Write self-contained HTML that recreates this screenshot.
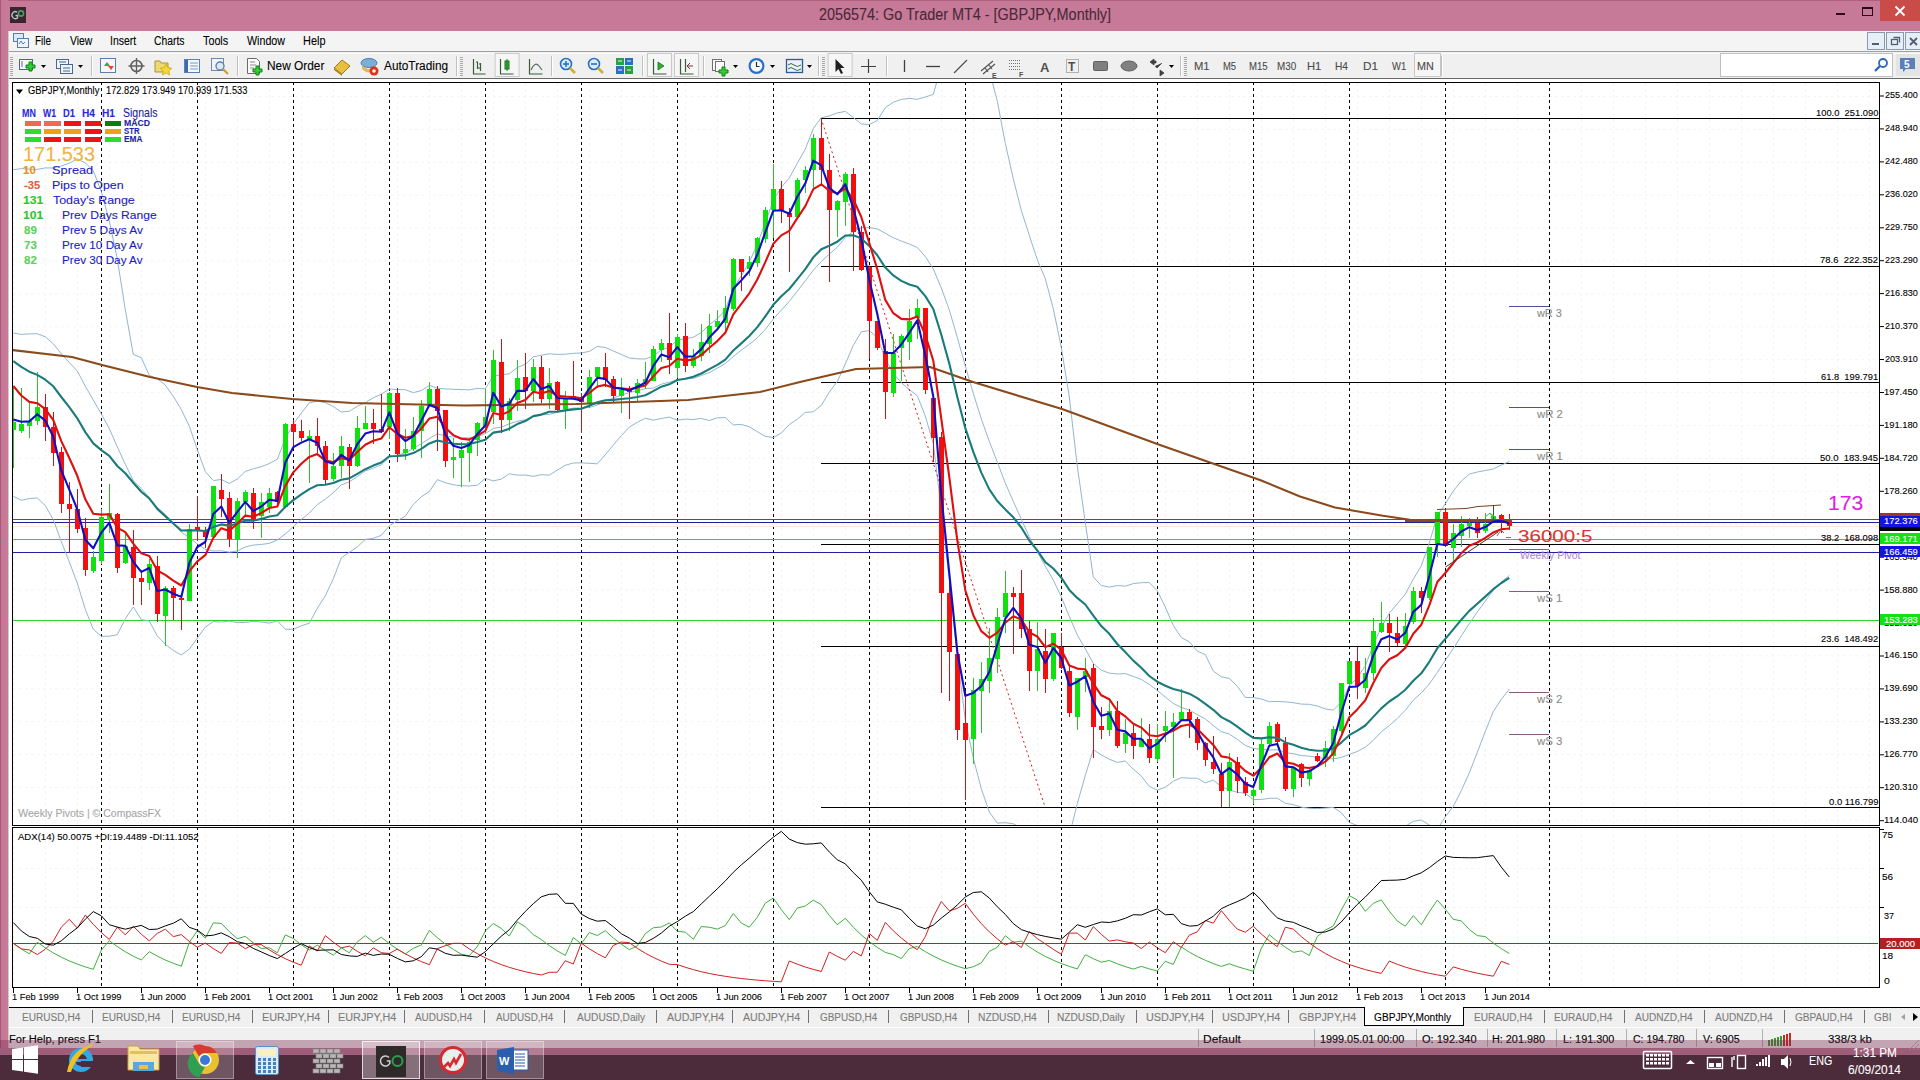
<!DOCTYPE html><html><head><meta charset="utf-8"><title>Go Trader MT4</title><style>
*{margin:0;padding:0;box-sizing:border-box}
html,body{width:1920px;height:1080px;overflow:hidden;background:#fff}
body{position:relative;font-family:'Liberation Sans',sans-serif}
.a{position:absolute;white-space:nowrap}
.t{transform-origin:0 0;-webkit-text-stroke:0.1px currentColor}
</style></head><body>
<div class="a" style="left:0;top:0;width:1920px;height:31px;background:#c67a97;border-top:1px solid #b0607e"></div>
<div class="a" style="left:0;top:0;width:8px;height:1060px;background:#c67a97"></div>
<div class="a" style="left:0;top:0;width:1px;height:1060px;background:#a65a78"></div>
<div class="a" style="left:8px;top:31px;width:1px;height:1029px;background:#d8c8d0"></div>
<svg class="a" style="left:10px;top:7px" width="16" height="16"><rect x="0" y="0" width="16" height="16" fill="#3a2430"/><path d="M7,5 a3.5,3.5 0 1 0 0.5,6 v-2.5 h-2" stroke="#b8c8c0" stroke-width="1.4" fill="none"/><circle cx="11" cy="6.5" r="2.6" fill="none" stroke="#4a9a6a" stroke-width="1.6"/></svg>
<div class="a" style="left:1880px;top:0;width:40px;height:21px;background:#c94c48"></div>
<div class="a" style="left:1836px;top:13px;width:9px;height:2px;background:#2a0a18"></div>
<div class="a" style="left:1862px;top:7px;width:11px;height:9px;border:1px solid #2a0a18;border-top:2px solid #2a0a18"></div>
<svg class="a" style="left:1894px;top:5px" width="12" height="12"><path d="M1.5,1.5 L10.5,10.5 M10.5,1.5 L1.5,10.5" stroke="#fff" stroke-width="1.8"/></svg>
<div class="a" style="left:9px;top:31px;width:1911px;height:21px;background:#f4f4f4;border-bottom:1px solid #a0a0a0"></div>
<div class="a" style="left:1867px;top:32px;width:18px;height:18px;background:#e6eef8;border:1px solid #8a9aaa"></div>
<div class="a" style="left:1886px;top:32px;width:18px;height:18px;background:#e6eef8;border:1px solid #8a9aaa"></div>
<div class="a" style="left:1905px;top:32px;width:18px;height:18px;background:#e6eef8;border:1px solid #8a9aaa"></div>
<div class="a" style="left:1872px;top:43px;width:7px;height:2px;background:#506070"></div>
<svg class="a" style="left:1888px;top:34px" width="14" height="14"><rect x="3.5" y="5.5" width="6" height="5" fill="none" stroke="#506070" stroke-width="1.3"/><path d="M5.5,3.5 H11.5 V8.5" fill="none" stroke="#506070" stroke-width="1.3"/></svg>
<svg class="a" style="left:1907px;top:34px" width="14" height="14"><path d="M3,4 L10,11 M10,4 L3,11" stroke="#506070" stroke-width="1.8"/></svg>
<svg class="a" style="left:13px;top:33px" width="16" height="15"><rect x="0.5" y="0.5" width="10" height="8" fill="#dde8f4" stroke="#5a7ca8"/><rect x="4.5" y="5.5" width="11" height="9" fill="#eef4fa" stroke="#5a7ca8"/><path d="M6,11 l2,-3 l2,3 l2,-2" stroke="#5a7ca8" fill="none"/></svg>
<div class="a" style="left:9px;top:52px;width:1911px;height:27px;background:#f0f0f0;border-bottom:1px solid #6a6a6a"></div>
<div class="a" style="left:9px;top:53px;width:1911px;height:1px;background:#fafafa"></div>
<div class="a" style="left:9px;top:79px;width:1911px;height:928px;background:#fff"></div>
<svg class="a" style="left:0;top:0" width="1920" height="80"><rect x="10" y="57" width="3" height="1" fill="#a8a8a8"/><rect x="10" y="59" width="3" height="1" fill="#a8a8a8"/><rect x="10" y="61" width="3" height="1" fill="#a8a8a8"/><rect x="10" y="63" width="3" height="1" fill="#a8a8a8"/><rect x="10" y="65" width="3" height="1" fill="#a8a8a8"/><rect x="10" y="67" width="3" height="1" fill="#a8a8a8"/><rect x="10" y="69" width="3" height="1" fill="#a8a8a8"/><rect x="10" y="71" width="3" height="1" fill="#a8a8a8"/><rect x="10" y="73" width="3" height="1" fill="#a8a8a8"/><rect x="10" y="75" width="3" height="1" fill="#a8a8a8"/><rect x="19.5" y="59.5" width="13" height="10" fill="#f4f8fc" stroke="#486890"/><path d="M22,61 v6" stroke="#8a5a9a"/><path d="M29,62 h3 v3 h3 v3 h-3 v3 h-3 v-3 h-3 v-3 h3 z" fill="#30d030" stroke="#10801a"/><path d="M41,65 h5 l-2.5,3 z" fill="#000"/><rect x="56.5" y="59.5" width="12" height="9" fill="#eef4fa" stroke="#486890"/><rect x="60.5" y="64.5" width="12" height="9" fill="#eef4fa" stroke="#486890"/><path d="M59,62 h7 M63,68 h7 M63,71 h7" stroke="#486890"/><path d="M78,65 h5 l-2.5,3 z" fill="#000"/><rect x="91" y="56" width="1" height="20" fill="#c0c0c0"/><rect x="92" y="56" width="1" height="20" fill="#fff"/><rect x="100.5" y="58.5" width="15" height="14" fill="#f4f8fc" stroke="#5a80b0"/><path d="M104,66 l3,-4 l3,4 z" fill="#20b040"/><path d="M108,66 l3,4 l3,-4 z" fill="#e04a30"/><circle cx="136.5" cy="66" r="5.5" fill="none" stroke="#606060" stroke-width="1.6"/><path d="M136.5,58 v16 M128.5,66 h16" stroke="#606060" stroke-width="1.4"/><path d="M155,61 h5 l1,2 h7 v9 h-13 z" fill="#f0d870" stroke="#b09030"/><path d="M166,64 l1.8,3.6 4,.6 -2.9,2.8 .7,4 -3.6,-1.9 -3.6,1.9 .7,-4 -2.9,-2.8 4,-.6 z" fill="#f8d830" stroke="#c0a020" stroke-width=".7"/><rect x="184.5" y="59.5" width="15" height="13" fill="#f4f8fc" stroke="#5a80b0"/><rect x="185" y="60" width="3" height="12" fill="#3a6ab8"/><path d="M190,63 h8 M190,66 h8 M190,69 h8" stroke="#7a9ac0"/><rect x="211.5" y="58.5" width="12" height="12" fill="#f0f4fa" stroke="#6a8ab0"/><circle cx="220" cy="66" r="4" fill="#dce8f4" stroke="#5a7ca8" stroke-width="1.3"/><path d="M223,69 l5,5" stroke="#c8a030" stroke-width="2.2"/><rect x="237" y="56" width="1" height="20" fill="#c0c0c0"/><rect x="238" y="56" width="1" height="20" fill="#fff"/><path d="M247.5,58.5 h9 l3,3 v12 h-12 z" fill="#fafafa" stroke="#6a6a6a"/><path d="M250,62 h5 M250,65 h6 M250,68 h4" stroke="#8a8a8a"/><path d="M256,66 h3 v3 h3 v3 h-3 v3 h-3 v-3 h-3 v-3 h3 z" fill="#30d030" stroke="#10801a"/><path d="M334,68 l8,-8 l8,6 l-8,8 z" fill="#e8c040" stroke="#a07818"/><path d="M334,68 l8,6 v2 l-8,-6 z" fill="#b08820"/><ellipse cx="369" cy="63" rx="8" ry="4.5" fill="#7ab0d8" stroke="#4a80b0"/><path d="M362,65 q7,8 14,0 v4 q-7,7 -14,0 z" fill="#e0b860"/><circle cx="374" cy="71" r="4.5" fill="#e03020"/><circle cx="374" cy="71" r="1.8" fill="#fff"/><rect x="456" y="56" width="1" height="20" fill="#c0c0c0"/><rect x="457" y="56" width="1" height="20" fill="#fff"/><rect x="460" y="57" width="3" height="1" fill="#a8a8a8"/><rect x="460" y="59" width="3" height="1" fill="#a8a8a8"/><rect x="460" y="61" width="3" height="1" fill="#a8a8a8"/><rect x="460" y="63" width="3" height="1" fill="#a8a8a8"/><rect x="460" y="65" width="3" height="1" fill="#a8a8a8"/><rect x="460" y="67" width="3" height="1" fill="#a8a8a8"/><rect x="460" y="69" width="3" height="1" fill="#a8a8a8"/><rect x="460" y="71" width="3" height="1" fill="#a8a8a8"/><rect x="460" y="73" width="3" height="1" fill="#a8a8a8"/><rect x="460" y="75" width="3" height="1" fill="#a8a8a8"/><path d="M473.5,59 v15 h12 M477.5,62 v7 M480.5,63 v8" stroke="#3a5a3a" stroke-width="1.2" fill="none"/><path d="M476,62 h2 M478,68 h2 M479,64 h2" stroke="#3a5a3a"/><rect x="495.1" y="53.5" width="24" height="23" fill="#f6f6f6" stroke="#c8c8c8"/><path d="M500.5,59 v15 h13" stroke="#3a5a3a" stroke-width="1.2" fill="none"/><rect x="505" y="61" width="4" height="8" fill="#30c030" stroke="#207020"/><path d="M507,59 v12" stroke="#207020"/><path d="M529.5,59 v15 h13" stroke="#3a5a3a" stroke-width="1.2" fill="none"/><path d="M531,70 q4,-9 8,-4 l3,4" stroke="#5a6a5a" fill="none" stroke-width="1.2"/><rect x="551" y="56" width="1" height="20" fill="#c0c0c0"/><rect x="552" y="56" width="1" height="20" fill="#fff"/><circle cx="566" cy="64" r="5.5" fill="#d8ecfa" stroke="#2a70c0" stroke-width="1.6"/><path d="M570,68 l5,5" stroke="#d0b030" stroke-width="2.6"/><path d="M563,64 h6" stroke="#2a70c0" stroke-width="1.6"/><path d="M566,61 v6" stroke="#2a70c0" stroke-width="1.6"/><circle cx="594" cy="64" r="5.5" fill="#d8ecfa" stroke="#2a70c0" stroke-width="1.6"/><path d="M598,68 l5,5" stroke="#d0b030" stroke-width="2.6"/><path d="M591,64 h6" stroke="#2a70c0" stroke-width="1.6"/><rect x="616" y="58" width="8" height="7" fill="#2aa040"/><rect x="625" y="58" width="8" height="7" fill="#2a70c0"/><rect x="616" y="66" width="8" height="8" fill="#2a70c0"/><rect x="625" y="66" width="8" height="8" fill="#2aa040"/><path d="M618,61 h4 M627,61 h4 M618,70 h4 M627,70 h4" stroke="#e8f4ff"/><rect x="642" y="56" width="1" height="20" fill="#c0c0c0"/><rect x="643" y="56" width="1" height="20" fill="#fff"/><rect x="647.5" y="53.5" width="24" height="23" fill="#f6f6f6" stroke="#c8c8c8"/><path d="M653.5,59 v15 h13" stroke="#3a5a3a" stroke-width="1.2" fill="none"/><path d="M658,62 v8 l6,-4 z" fill="#30b030" stroke="#207020" stroke-width=".8"/><rect x="674.5" y="53.5" width="24" height="23" fill="#f6f6f6" stroke="#c8c8c8"/><path d="M680.5,59 v15 h13 M685.5,59 v13" stroke="#3a5a3a" stroke-width="1.2" fill="none"/><path d="M693,66 h-6 l3,-3 M687,66 l3,3" stroke="#803030" fill="none"/><rect x="703" y="56" width="1" height="20" fill="#c0c0c0"/><rect x="704" y="56" width="1" height="20" fill="#fff"/><rect x="712.5" y="59.5" width="9" height="11" fill="#fafafa" stroke="#707070"/><rect x="715.5" y="61.5" width="9" height="10" fill="#fafafa" stroke="#707070"/><path d="M722,67 h3 v3 h3 v3 h-3 v3 h-3 v-3 h-3 v-3 h3 z" fill="#30d030" stroke="#10801a"/><path d="M733,65 h5 l-2.5,3 z" fill="#000"/><circle cx="756.5" cy="66" r="8" fill="#2a70c8"/><circle cx="756.5" cy="66" r="5.8" fill="#f8fcff"/><path d="M756.5,62 v4.5 h3" stroke="#203050" fill="none" stroke-width="1.2"/><path d="M770,65 h5 l-2.5,3 z" fill="#000"/><rect x="786.5" y="59.5" width="16" height="13" fill="#e8f2fa" stroke="#2a5a9a" stroke-width="1.3"/><path d="M788,65 q3,-3 6,0 t7,0 M788,69 q3,-3 6,0 t7,0" stroke="#3a6a3a" fill="none"/><path d="M807,65 h5 l-2.5,3 z" fill="#000"/><rect x="818" y="56" width="1" height="20" fill="#c0c0c0"/><rect x="819" y="56" width="1" height="20" fill="#fff"/><rect x="822" y="57" width="3" height="1" fill="#a8a8a8"/><rect x="822" y="59" width="3" height="1" fill="#a8a8a8"/><rect x="822" y="61" width="3" height="1" fill="#a8a8a8"/><rect x="822" y="63" width="3" height="1" fill="#a8a8a8"/><rect x="822" y="65" width="3" height="1" fill="#a8a8a8"/><rect x="822" y="67" width="3" height="1" fill="#a8a8a8"/><rect x="822" y="69" width="3" height="1" fill="#a8a8a8"/><rect x="822" y="71" width="3" height="1" fill="#a8a8a8"/><rect x="822" y="73" width="3" height="1" fill="#a8a8a8"/><rect x="822" y="75" width="3" height="1" fill="#a8a8a8"/><rect x="828.1" y="53.5" width="24" height="23" fill="#f6f6f6" stroke="#c8c8c8"/><path d="M835.5,59 v13 l3,-3 l2.5,5 l2,-1 l-2.5,-5 h4 z" fill="#202020"/><path d="M868.5,59 v14 M861,66.5 h15" stroke="#404040" stroke-width="1.2"/><rect x="886" y="56" width="1" height="20" fill="#c0c0c0"/><rect x="887" y="56" width="1" height="20" fill="#fff"/><path d="M904.5,60 v12" stroke="#404040" stroke-width="1.3"/><path d="M926,66.5 h14" stroke="#404040" stroke-width="1.3"/><path d="M954,73 l13,-13" stroke="#505050" stroke-width="1.3"/><path d="M981,71 l12,-10 M983,74 l12,-10 M985,68 l3,4 M989,65 l3,4" stroke="#505050" stroke-width="1.1"/><text x="992" y="78" font-size="7" font-family="Liberation Sans" font-weight="bold" fill="#505050">E</text><path d="M1009,60.5 h12 M1009,63.5 h12 M1009,66.5 h12 M1009,69.5 h12" stroke="#707070" stroke-dasharray="1,1"/><text x="1019" y="77" font-size="7" font-family="Liberation Sans" font-weight="bold" fill="#505050">F</text><text x="1040" y="72" font-size="13" font-family="Liberation Sans" font-weight="bold" fill="#505050">A</text><rect x="1066.5" y="59.5" width="12" height="13" fill="none" stroke="#707070" stroke-dasharray="1,1"/><text x="1068" y="71" font-size="12" font-family="Liberation Sans" font-weight="bold" fill="#505050">T</text><rect x="1093.5" y="61.5" width="14" height="9" rx="1" fill="#808080" stroke="#606060"/><ellipse cx="1129" cy="66" rx="8" ry="5" fill="#808080" stroke="#606060"/><path d="M1150,62 l4,-3 v2 h2 v2 h-2 v2 z M1155,66 l2,2 l5,-5 M1160,70 l4,3 l-4,3 z" fill="#404040" stroke="#404040" stroke-width=".8"/><path d="M1169,65 h5 l-2.5,3 z" fill="#000"/><rect x="1180" y="56" width="1" height="20" fill="#c0c0c0"/><rect x="1181" y="56" width="1" height="20" fill="#fff"/><rect x="1184" y="57" width="3" height="1" fill="#a8a8a8"/><rect x="1184" y="59" width="3" height="1" fill="#a8a8a8"/><rect x="1184" y="61" width="3" height="1" fill="#a8a8a8"/><rect x="1184" y="63" width="3" height="1" fill="#a8a8a8"/><rect x="1184" y="65" width="3" height="1" fill="#a8a8a8"/><rect x="1184" y="67" width="3" height="1" fill="#a8a8a8"/><rect x="1184" y="69" width="3" height="1" fill="#a8a8a8"/><rect x="1184" y="71" width="3" height="1" fill="#a8a8a8"/><rect x="1184" y="73" width="3" height="1" fill="#a8a8a8"/><rect x="1184" y="75" width="3" height="1" fill="#a8a8a8"/><rect x="1414.5" y="53.5" width="26" height="23" fill="#f6f6f6" stroke="#c8c8c8"/><rect x="1441" y="56" width="1" height="20" fill="#c0c0c0"/><rect x="1442" y="56" width="1" height="20" fill="#fff"/><rect x="1720.5" y="53.5" width="172" height="23" fill="#fff" stroke="#c0c0c0"/><circle cx="1883" cy="63" r="4" fill="none" stroke="#2a6ab8" stroke-width="1.8"/><path d="M1880,66 l-5,5" stroke="#2a6ab8" stroke-width="2.4"/><rect x="1896" y="54" width="24" height="22" fill="#e4e4e4"/><path d="M1900,58 h15 v11 h-9 l-3,3 v-3 h-3 z" fill="#5a80b8"/><text x="1904" y="68" font-size="10" font-family="Liberation Sans" font-weight="bold" fill="#fff">5</text></svg>
<svg class="a" style="left:0;top:0" width="1920" height="1080"><line x1="13" x2="1879" y1="96.5" y2="96.5" stroke="#f5f5f5" stroke-width="1" stroke-dasharray="3,3"/>
<line x1="13" x2="1879" y1="129.4" y2="129.4" stroke="#f5f5f5" stroke-width="1" stroke-dasharray="3,3"/>
<line x1="13" x2="1879" y1="162.3" y2="162.3" stroke="#f5f5f5" stroke-width="1" stroke-dasharray="3,3"/>
<line x1="13" x2="1879" y1="195.2" y2="195.2" stroke="#f5f5f5" stroke-width="1" stroke-dasharray="3,3"/>
<line x1="13" x2="1879" y1="228.1" y2="228.1" stroke="#f5f5f5" stroke-width="1" stroke-dasharray="3,3"/>
<line x1="13" x2="1879" y1="261.0" y2="261.0" stroke="#f5f5f5" stroke-width="1" stroke-dasharray="3,3"/>
<line x1="13" x2="1879" y1="293.9" y2="293.9" stroke="#f5f5f5" stroke-width="1" stroke-dasharray="3,3"/>
<line x1="13" x2="1879" y1="326.8" y2="326.8" stroke="#f5f5f5" stroke-width="1" stroke-dasharray="3,3"/>
<line x1="13" x2="1879" y1="359.7" y2="359.7" stroke="#f5f5f5" stroke-width="1" stroke-dasharray="3,3"/>
<line x1="13" x2="1879" y1="392.6" y2="392.6" stroke="#f5f5f5" stroke-width="1" stroke-dasharray="3,3"/>
<line x1="13" x2="1879" y1="425.5" y2="425.5" stroke="#f5f5f5" stroke-width="1" stroke-dasharray="3,3"/>
<line x1="13" x2="1879" y1="458.4" y2="458.4" stroke="#f5f5f5" stroke-width="1" stroke-dasharray="3,3"/>
<line x1="13" x2="1879" y1="491.3" y2="491.3" stroke="#f5f5f5" stroke-width="1" stroke-dasharray="3,3"/>
<line x1="13" x2="1879" y1="524.2" y2="524.2" stroke="#f5f5f5" stroke-width="1" stroke-dasharray="3,3"/>
<line x1="13" x2="1879" y1="557.1" y2="557.1" stroke="#f5f5f5" stroke-width="1" stroke-dasharray="3,3"/>
<line x1="13" x2="1879" y1="590.0" y2="590.0" stroke="#f5f5f5" stroke-width="1" stroke-dasharray="3,3"/>
<line x1="13" x2="1879" y1="622.9" y2="622.9" stroke="#f5f5f5" stroke-width="1" stroke-dasharray="3,3"/>
<line x1="13" x2="1879" y1="655.8" y2="655.8" stroke="#f5f5f5" stroke-width="1" stroke-dasharray="3,3"/>
<line x1="13" x2="1879" y1="688.7" y2="688.7" stroke="#f5f5f5" stroke-width="1" stroke-dasharray="3,3"/>
<line x1="13" x2="1879" y1="721.6" y2="721.6" stroke="#f5f5f5" stroke-width="1" stroke-dasharray="3,3"/>
<line x1="13" x2="1879" y1="754.5" y2="754.5" stroke="#f5f5f5" stroke-width="1" stroke-dasharray="3,3"/>
<line x1="13" x2="1879" y1="787.4" y2="787.4" stroke="#f5f5f5" stroke-width="1" stroke-dasharray="3,3"/>
<line x1="13" x2="1879" y1="820.3" y2="820.3" stroke="#f5f5f5" stroke-width="1" stroke-dasharray="3,3"/>
<line x1="13.5" x2="13.5" y1="83" y2="825" stroke="#f5f5f5" stroke-width="1" stroke-dasharray="3,3"/>
<line x1="13.5" x2="13.5" y1="828" y2="986" stroke="#f5f5f5" stroke-width="1" stroke-dasharray="3,3"/>
<line x1="45.5" x2="45.5" y1="83" y2="825" stroke="#f5f5f5" stroke-width="1" stroke-dasharray="3,3"/>
<line x1="45.5" x2="45.5" y1="828" y2="986" stroke="#f5f5f5" stroke-width="1" stroke-dasharray="3,3"/>
<line x1="77.5" x2="77.5" y1="83" y2="825" stroke="#f5f5f5" stroke-width="1" stroke-dasharray="3,3"/>
<line x1="77.5" x2="77.5" y1="828" y2="986" stroke="#f5f5f5" stroke-width="1" stroke-dasharray="3,3"/>
<line x1="109.5" x2="109.5" y1="83" y2="825" stroke="#f5f5f5" stroke-width="1" stroke-dasharray="3,3"/>
<line x1="109.5" x2="109.5" y1="828" y2="986" stroke="#f5f5f5" stroke-width="1" stroke-dasharray="3,3"/>
<line x1="141.5" x2="141.5" y1="83" y2="825" stroke="#f5f5f5" stroke-width="1" stroke-dasharray="3,3"/>
<line x1="141.5" x2="141.5" y1="828" y2="986" stroke="#f5f5f5" stroke-width="1" stroke-dasharray="3,3"/>
<line x1="173.5" x2="173.5" y1="83" y2="825" stroke="#f5f5f5" stroke-width="1" stroke-dasharray="3,3"/>
<line x1="173.5" x2="173.5" y1="828" y2="986" stroke="#f5f5f5" stroke-width="1" stroke-dasharray="3,3"/>
<line x1="205.5" x2="205.5" y1="83" y2="825" stroke="#f5f5f5" stroke-width="1" stroke-dasharray="3,3"/>
<line x1="205.5" x2="205.5" y1="828" y2="986" stroke="#f5f5f5" stroke-width="1" stroke-dasharray="3,3"/>
<line x1="237.5" x2="237.5" y1="83" y2="825" stroke="#f5f5f5" stroke-width="1" stroke-dasharray="3,3"/>
<line x1="237.5" x2="237.5" y1="828" y2="986" stroke="#f5f5f5" stroke-width="1" stroke-dasharray="3,3"/>
<line x1="269.5" x2="269.5" y1="83" y2="825" stroke="#f5f5f5" stroke-width="1" stroke-dasharray="3,3"/>
<line x1="269.5" x2="269.5" y1="828" y2="986" stroke="#f5f5f5" stroke-width="1" stroke-dasharray="3,3"/>
<line x1="301.5" x2="301.5" y1="83" y2="825" stroke="#f5f5f5" stroke-width="1" stroke-dasharray="3,3"/>
<line x1="301.5" x2="301.5" y1="828" y2="986" stroke="#f5f5f5" stroke-width="1" stroke-dasharray="3,3"/>
<line x1="333.5" x2="333.5" y1="83" y2="825" stroke="#f5f5f5" stroke-width="1" stroke-dasharray="3,3"/>
<line x1="333.5" x2="333.5" y1="828" y2="986" stroke="#f5f5f5" stroke-width="1" stroke-dasharray="3,3"/>
<line x1="365.5" x2="365.5" y1="83" y2="825" stroke="#f5f5f5" stroke-width="1" stroke-dasharray="3,3"/>
<line x1="365.5" x2="365.5" y1="828" y2="986" stroke="#f5f5f5" stroke-width="1" stroke-dasharray="3,3"/>
<line x1="397.5" x2="397.5" y1="83" y2="825" stroke="#f5f5f5" stroke-width="1" stroke-dasharray="3,3"/>
<line x1="397.5" x2="397.5" y1="828" y2="986" stroke="#f5f5f5" stroke-width="1" stroke-dasharray="3,3"/>
<line x1="429.5" x2="429.5" y1="83" y2="825" stroke="#f5f5f5" stroke-width="1" stroke-dasharray="3,3"/>
<line x1="429.5" x2="429.5" y1="828" y2="986" stroke="#f5f5f5" stroke-width="1" stroke-dasharray="3,3"/>
<line x1="461.5" x2="461.5" y1="83" y2="825" stroke="#f5f5f5" stroke-width="1" stroke-dasharray="3,3"/>
<line x1="461.5" x2="461.5" y1="828" y2="986" stroke="#f5f5f5" stroke-width="1" stroke-dasharray="3,3"/>
<line x1="493.5" x2="493.5" y1="83" y2="825" stroke="#f5f5f5" stroke-width="1" stroke-dasharray="3,3"/>
<line x1="493.5" x2="493.5" y1="828" y2="986" stroke="#f5f5f5" stroke-width="1" stroke-dasharray="3,3"/>
<line x1="525.5" x2="525.5" y1="83" y2="825" stroke="#f5f5f5" stroke-width="1" stroke-dasharray="3,3"/>
<line x1="525.5" x2="525.5" y1="828" y2="986" stroke="#f5f5f5" stroke-width="1" stroke-dasharray="3,3"/>
<line x1="557.5" x2="557.5" y1="83" y2="825" stroke="#f5f5f5" stroke-width="1" stroke-dasharray="3,3"/>
<line x1="557.5" x2="557.5" y1="828" y2="986" stroke="#f5f5f5" stroke-width="1" stroke-dasharray="3,3"/>
<line x1="589.5" x2="589.5" y1="83" y2="825" stroke="#f5f5f5" stroke-width="1" stroke-dasharray="3,3"/>
<line x1="589.5" x2="589.5" y1="828" y2="986" stroke="#f5f5f5" stroke-width="1" stroke-dasharray="3,3"/>
<line x1="621.5" x2="621.5" y1="83" y2="825" stroke="#f5f5f5" stroke-width="1" stroke-dasharray="3,3"/>
<line x1="621.5" x2="621.5" y1="828" y2="986" stroke="#f5f5f5" stroke-width="1" stroke-dasharray="3,3"/>
<line x1="653.5" x2="653.5" y1="83" y2="825" stroke="#f5f5f5" stroke-width="1" stroke-dasharray="3,3"/>
<line x1="653.5" x2="653.5" y1="828" y2="986" stroke="#f5f5f5" stroke-width="1" stroke-dasharray="3,3"/>
<line x1="685.5" x2="685.5" y1="83" y2="825" stroke="#f5f5f5" stroke-width="1" stroke-dasharray="3,3"/>
<line x1="685.5" x2="685.5" y1="828" y2="986" stroke="#f5f5f5" stroke-width="1" stroke-dasharray="3,3"/>
<line x1="717.5" x2="717.5" y1="83" y2="825" stroke="#f5f5f5" stroke-width="1" stroke-dasharray="3,3"/>
<line x1="717.5" x2="717.5" y1="828" y2="986" stroke="#f5f5f5" stroke-width="1" stroke-dasharray="3,3"/>
<line x1="749.5" x2="749.5" y1="83" y2="825" stroke="#f5f5f5" stroke-width="1" stroke-dasharray="3,3"/>
<line x1="749.5" x2="749.5" y1="828" y2="986" stroke="#f5f5f5" stroke-width="1" stroke-dasharray="3,3"/>
<line x1="781.5" x2="781.5" y1="83" y2="825" stroke="#f5f5f5" stroke-width="1" stroke-dasharray="3,3"/>
<line x1="781.5" x2="781.5" y1="828" y2="986" stroke="#f5f5f5" stroke-width="1" stroke-dasharray="3,3"/>
<line x1="813.5" x2="813.5" y1="83" y2="825" stroke="#f5f5f5" stroke-width="1" stroke-dasharray="3,3"/>
<line x1="813.5" x2="813.5" y1="828" y2="986" stroke="#f5f5f5" stroke-width="1" stroke-dasharray="3,3"/>
<line x1="845.5" x2="845.5" y1="83" y2="825" stroke="#f5f5f5" stroke-width="1" stroke-dasharray="3,3"/>
<line x1="845.5" x2="845.5" y1="828" y2="986" stroke="#f5f5f5" stroke-width="1" stroke-dasharray="3,3"/>
<line x1="877.5" x2="877.5" y1="83" y2="825" stroke="#f5f5f5" stroke-width="1" stroke-dasharray="3,3"/>
<line x1="877.5" x2="877.5" y1="828" y2="986" stroke="#f5f5f5" stroke-width="1" stroke-dasharray="3,3"/>
<line x1="909.5" x2="909.5" y1="83" y2="825" stroke="#f5f5f5" stroke-width="1" stroke-dasharray="3,3"/>
<line x1="909.5" x2="909.5" y1="828" y2="986" stroke="#f5f5f5" stroke-width="1" stroke-dasharray="3,3"/>
<line x1="941.5" x2="941.5" y1="83" y2="825" stroke="#f5f5f5" stroke-width="1" stroke-dasharray="3,3"/>
<line x1="941.5" x2="941.5" y1="828" y2="986" stroke="#f5f5f5" stroke-width="1" stroke-dasharray="3,3"/>
<line x1="973.5" x2="973.5" y1="83" y2="825" stroke="#f5f5f5" stroke-width="1" stroke-dasharray="3,3"/>
<line x1="973.5" x2="973.5" y1="828" y2="986" stroke="#f5f5f5" stroke-width="1" stroke-dasharray="3,3"/>
<line x1="1005.5" x2="1005.5" y1="83" y2="825" stroke="#f5f5f5" stroke-width="1" stroke-dasharray="3,3"/>
<line x1="1005.5" x2="1005.5" y1="828" y2="986" stroke="#f5f5f5" stroke-width="1" stroke-dasharray="3,3"/>
<line x1="1037.5" x2="1037.5" y1="83" y2="825" stroke="#f5f5f5" stroke-width="1" stroke-dasharray="3,3"/>
<line x1="1037.5" x2="1037.5" y1="828" y2="986" stroke="#f5f5f5" stroke-width="1" stroke-dasharray="3,3"/>
<line x1="1069.5" x2="1069.5" y1="83" y2="825" stroke="#f5f5f5" stroke-width="1" stroke-dasharray="3,3"/>
<line x1="1069.5" x2="1069.5" y1="828" y2="986" stroke="#f5f5f5" stroke-width="1" stroke-dasharray="3,3"/>
<line x1="1101.5" x2="1101.5" y1="83" y2="825" stroke="#f5f5f5" stroke-width="1" stroke-dasharray="3,3"/>
<line x1="1101.5" x2="1101.5" y1="828" y2="986" stroke="#f5f5f5" stroke-width="1" stroke-dasharray="3,3"/>
<line x1="1133.5" x2="1133.5" y1="83" y2="825" stroke="#f5f5f5" stroke-width="1" stroke-dasharray="3,3"/>
<line x1="1133.5" x2="1133.5" y1="828" y2="986" stroke="#f5f5f5" stroke-width="1" stroke-dasharray="3,3"/>
<line x1="1165.5" x2="1165.5" y1="83" y2="825" stroke="#f5f5f5" stroke-width="1" stroke-dasharray="3,3"/>
<line x1="1165.5" x2="1165.5" y1="828" y2="986" stroke="#f5f5f5" stroke-width="1" stroke-dasharray="3,3"/>
<line x1="1197.5" x2="1197.5" y1="83" y2="825" stroke="#f5f5f5" stroke-width="1" stroke-dasharray="3,3"/>
<line x1="1197.5" x2="1197.5" y1="828" y2="986" stroke="#f5f5f5" stroke-width="1" stroke-dasharray="3,3"/>
<line x1="1229.5" x2="1229.5" y1="83" y2="825" stroke="#f5f5f5" stroke-width="1" stroke-dasharray="3,3"/>
<line x1="1229.5" x2="1229.5" y1="828" y2="986" stroke="#f5f5f5" stroke-width="1" stroke-dasharray="3,3"/>
<line x1="1261.5" x2="1261.5" y1="83" y2="825" stroke="#f5f5f5" stroke-width="1" stroke-dasharray="3,3"/>
<line x1="1261.5" x2="1261.5" y1="828" y2="986" stroke="#f5f5f5" stroke-width="1" stroke-dasharray="3,3"/>
<line x1="1293.5" x2="1293.5" y1="83" y2="825" stroke="#f5f5f5" stroke-width="1" stroke-dasharray="3,3"/>
<line x1="1293.5" x2="1293.5" y1="828" y2="986" stroke="#f5f5f5" stroke-width="1" stroke-dasharray="3,3"/>
<line x1="1325.5" x2="1325.5" y1="83" y2="825" stroke="#f5f5f5" stroke-width="1" stroke-dasharray="3,3"/>
<line x1="1325.5" x2="1325.5" y1="828" y2="986" stroke="#f5f5f5" stroke-width="1" stroke-dasharray="3,3"/>
<line x1="1357.5" x2="1357.5" y1="83" y2="825" stroke="#f5f5f5" stroke-width="1" stroke-dasharray="3,3"/>
<line x1="1357.5" x2="1357.5" y1="828" y2="986" stroke="#f5f5f5" stroke-width="1" stroke-dasharray="3,3"/>
<line x1="1389.5" x2="1389.5" y1="83" y2="825" stroke="#f5f5f5" stroke-width="1" stroke-dasharray="3,3"/>
<line x1="1389.5" x2="1389.5" y1="828" y2="986" stroke="#f5f5f5" stroke-width="1" stroke-dasharray="3,3"/>
<line x1="1421.5" x2="1421.5" y1="83" y2="825" stroke="#f5f5f5" stroke-width="1" stroke-dasharray="3,3"/>
<line x1="1421.5" x2="1421.5" y1="828" y2="986" stroke="#f5f5f5" stroke-width="1" stroke-dasharray="3,3"/>
<line x1="1453.5" x2="1453.5" y1="83" y2="825" stroke="#f5f5f5" stroke-width="1" stroke-dasharray="3,3"/>
<line x1="1453.5" x2="1453.5" y1="828" y2="986" stroke="#f5f5f5" stroke-width="1" stroke-dasharray="3,3"/>
<line x1="1485.5" x2="1485.5" y1="83" y2="825" stroke="#f5f5f5" stroke-width="1" stroke-dasharray="3,3"/>
<line x1="1485.5" x2="1485.5" y1="828" y2="986" stroke="#f5f5f5" stroke-width="1" stroke-dasharray="3,3"/>
<line x1="1517.5" x2="1517.5" y1="83" y2="825" stroke="#f5f5f5" stroke-width="1" stroke-dasharray="3,3"/>
<line x1="1517.5" x2="1517.5" y1="828" y2="986" stroke="#f5f5f5" stroke-width="1" stroke-dasharray="3,3"/>
<line x1="1549.5" x2="1549.5" y1="83" y2="825" stroke="#f5f5f5" stroke-width="1" stroke-dasharray="3,3"/>
<line x1="1549.5" x2="1549.5" y1="828" y2="986" stroke="#f5f5f5" stroke-width="1" stroke-dasharray="3,3"/>
<line x1="1581.5" x2="1581.5" y1="83" y2="825" stroke="#f5f5f5" stroke-width="1" stroke-dasharray="3,3"/>
<line x1="1581.5" x2="1581.5" y1="828" y2="986" stroke="#f5f5f5" stroke-width="1" stroke-dasharray="3,3"/>
<line x1="1613.5" x2="1613.5" y1="83" y2="825" stroke="#f5f5f5" stroke-width="1" stroke-dasharray="3,3"/>
<line x1="1613.5" x2="1613.5" y1="828" y2="986" stroke="#f5f5f5" stroke-width="1" stroke-dasharray="3,3"/>
<line x1="1645.5" x2="1645.5" y1="83" y2="825" stroke="#f5f5f5" stroke-width="1" stroke-dasharray="3,3"/>
<line x1="1645.5" x2="1645.5" y1="828" y2="986" stroke="#f5f5f5" stroke-width="1" stroke-dasharray="3,3"/>
<line x1="1677.5" x2="1677.5" y1="83" y2="825" stroke="#f5f5f5" stroke-width="1" stroke-dasharray="3,3"/>
<line x1="1677.5" x2="1677.5" y1="828" y2="986" stroke="#f5f5f5" stroke-width="1" stroke-dasharray="3,3"/>
<line x1="1709.5" x2="1709.5" y1="83" y2="825" stroke="#f5f5f5" stroke-width="1" stroke-dasharray="3,3"/>
<line x1="1709.5" x2="1709.5" y1="828" y2="986" stroke="#f5f5f5" stroke-width="1" stroke-dasharray="3,3"/>
<line x1="1741.5" x2="1741.5" y1="83" y2="825" stroke="#f5f5f5" stroke-width="1" stroke-dasharray="3,3"/>
<line x1="1741.5" x2="1741.5" y1="828" y2="986" stroke="#f5f5f5" stroke-width="1" stroke-dasharray="3,3"/>
<line x1="1773.5" x2="1773.5" y1="83" y2="825" stroke="#f5f5f5" stroke-width="1" stroke-dasharray="3,3"/>
<line x1="1773.5" x2="1773.5" y1="828" y2="986" stroke="#f5f5f5" stroke-width="1" stroke-dasharray="3,3"/>
<line x1="1805.5" x2="1805.5" y1="83" y2="825" stroke="#f5f5f5" stroke-width="1" stroke-dasharray="3,3"/>
<line x1="1805.5" x2="1805.5" y1="828" y2="986" stroke="#f5f5f5" stroke-width="1" stroke-dasharray="3,3"/>
<line x1="1837.5" x2="1837.5" y1="83" y2="825" stroke="#f5f5f5" stroke-width="1" stroke-dasharray="3,3"/>
<line x1="1837.5" x2="1837.5" y1="828" y2="986" stroke="#f5f5f5" stroke-width="1" stroke-dasharray="3,3"/>
<line x1="1869.5" x2="1869.5" y1="83" y2="825" stroke="#f5f5f5" stroke-width="1" stroke-dasharray="3,3"/>
<line x1="1869.5" x2="1869.5" y1="828" y2="986" stroke="#f5f5f5" stroke-width="1" stroke-dasharray="3,3"/>
<line x1="13" x2="1879" y1="868.5" y2="868.5" stroke="#f5f5f5" stroke-width="1" stroke-dasharray="3,3"/>
<line x1="13" x2="1879" y1="907.5" y2="907.5" stroke="#f5f5f5" stroke-width="1" stroke-dasharray="3,3"/>
<line x1="13" x2="1879" y1="946.5" y2="946.5" stroke="#f5f5f5" stroke-width="1" stroke-dasharray="3,3"/>
<line x1="101.5" x2="101.5" y1="83" y2="825" stroke="#000" stroke-width="1" stroke-dasharray="3,3" stroke-dashoffset="1"/>
<line x1="101.5" x2="101.5" y1="828" y2="986" stroke="#000" stroke-width="1" stroke-dasharray="3,3" stroke-dashoffset="1"/>
<line x1="197.5" x2="197.5" y1="83" y2="825" stroke="#000" stroke-width="1" stroke-dasharray="3,3" stroke-dashoffset="1"/>
<line x1="197.5" x2="197.5" y1="828" y2="986" stroke="#000" stroke-width="1" stroke-dasharray="3,3" stroke-dashoffset="1"/>
<line x1="293.5" x2="293.5" y1="83" y2="825" stroke="#000" stroke-width="1" stroke-dasharray="3,3" stroke-dashoffset="1"/>
<line x1="293.5" x2="293.5" y1="828" y2="986" stroke="#000" stroke-width="1" stroke-dasharray="3,3" stroke-dashoffset="1"/>
<line x1="389.5" x2="389.5" y1="83" y2="825" stroke="#000" stroke-width="1" stroke-dasharray="3,3" stroke-dashoffset="1"/>
<line x1="389.5" x2="389.5" y1="828" y2="986" stroke="#000" stroke-width="1" stroke-dasharray="3,3" stroke-dashoffset="1"/>
<line x1="485.5" x2="485.5" y1="83" y2="825" stroke="#000" stroke-width="1" stroke-dasharray="3,3" stroke-dashoffset="1"/>
<line x1="485.5" x2="485.5" y1="828" y2="986" stroke="#000" stroke-width="1" stroke-dasharray="3,3" stroke-dashoffset="1"/>
<line x1="581.5" x2="581.5" y1="83" y2="825" stroke="#000" stroke-width="1" stroke-dasharray="3,3" stroke-dashoffset="1"/>
<line x1="581.5" x2="581.5" y1="828" y2="986" stroke="#000" stroke-width="1" stroke-dasharray="3,3" stroke-dashoffset="1"/>
<line x1="677.5" x2="677.5" y1="83" y2="825" stroke="#000" stroke-width="1" stroke-dasharray="3,3" stroke-dashoffset="1"/>
<line x1="677.5" x2="677.5" y1="828" y2="986" stroke="#000" stroke-width="1" stroke-dasharray="3,3" stroke-dashoffset="1"/>
<line x1="773.5" x2="773.5" y1="83" y2="825" stroke="#000" stroke-width="1" stroke-dasharray="3,3" stroke-dashoffset="1"/>
<line x1="773.5" x2="773.5" y1="828" y2="986" stroke="#000" stroke-width="1" stroke-dasharray="3,3" stroke-dashoffset="1"/>
<line x1="869.5" x2="869.5" y1="83" y2="825" stroke="#000" stroke-width="1" stroke-dasharray="3,3" stroke-dashoffset="1"/>
<line x1="869.5" x2="869.5" y1="828" y2="986" stroke="#000" stroke-width="1" stroke-dasharray="3,3" stroke-dashoffset="1"/>
<line x1="965.5" x2="965.5" y1="83" y2="825" stroke="#000" stroke-width="1" stroke-dasharray="3,3" stroke-dashoffset="1"/>
<line x1="965.5" x2="965.5" y1="828" y2="986" stroke="#000" stroke-width="1" stroke-dasharray="3,3" stroke-dashoffset="1"/>
<line x1="1061.5" x2="1061.5" y1="83" y2="825" stroke="#000" stroke-width="1" stroke-dasharray="3,3" stroke-dashoffset="1"/>
<line x1="1061.5" x2="1061.5" y1="828" y2="986" stroke="#000" stroke-width="1" stroke-dasharray="3,3" stroke-dashoffset="1"/>
<line x1="1157.5" x2="1157.5" y1="83" y2="825" stroke="#000" stroke-width="1" stroke-dasharray="3,3" stroke-dashoffset="1"/>
<line x1="1157.5" x2="1157.5" y1="828" y2="986" stroke="#000" stroke-width="1" stroke-dasharray="3,3" stroke-dashoffset="1"/>
<line x1="1253.5" x2="1253.5" y1="83" y2="825" stroke="#000" stroke-width="1" stroke-dasharray="3,3" stroke-dashoffset="1"/>
<line x1="1253.5" x2="1253.5" y1="828" y2="986" stroke="#000" stroke-width="1" stroke-dasharray="3,3" stroke-dashoffset="1"/>
<line x1="1349.5" x2="1349.5" y1="83" y2="825" stroke="#000" stroke-width="1" stroke-dasharray="3,3" stroke-dashoffset="1"/>
<line x1="1349.5" x2="1349.5" y1="828" y2="986" stroke="#000" stroke-width="1" stroke-dasharray="3,3" stroke-dashoffset="1"/>
<line x1="1445.5" x2="1445.5" y1="83" y2="825" stroke="#000" stroke-width="1" stroke-dasharray="3,3" stroke-dashoffset="1"/>
<line x1="1445.5" x2="1445.5" y1="828" y2="986" stroke="#000" stroke-width="1" stroke-dasharray="3,3" stroke-dashoffset="1"/>
<line x1="1549.5" x2="1549.5" y1="83" y2="825" stroke="#000" stroke-width="1" stroke-dasharray="3,3" stroke-dashoffset="1"/>
<line x1="1549.5" x2="1549.5" y1="828" y2="986" stroke="#000" stroke-width="1" stroke-dasharray="3,3" stroke-dashoffset="1"/>
<line x1="13" x2="1879" y1="519.5" y2="519.5" stroke="#a0303a" stroke-width="1.2"/>
<line x1="13" x2="1879" y1="522.5" y2="522.5" stroke="#2020a0" stroke-width="1.2"/>
<line x1="13" x2="1879" y1="526.5" y2="526.5" stroke="#f4ecd0" stroke-width="1"/>
<line x1="13" x2="1879" y1="539.5" y2="539.5" stroke="#30d030" stroke-width="1.2"/>
<line x1="13" x2="1879" y1="552.5" y2="552.5" stroke="#2020a0" stroke-width="1.2"/>
<line x1="13" x2="1879" y1="620.5" y2="620.5" stroke="#30d030" stroke-width="1.2"/>
<line x1="821" x2="1879" y1="118.5" y2="118.5" stroke="#000" stroke-width="1"/>
<line x1="821" x2="1879" y1="266.5" y2="266.5" stroke="#000" stroke-width="1"/>
<line x1="821" x2="1879" y1="382.5" y2="382.5" stroke="#000" stroke-width="1"/>
<line x1="821" x2="1879" y1="463.5" y2="463.5" stroke="#000" stroke-width="1"/>
<line x1="821" x2="1879" y1="544.5" y2="544.5" stroke="#000" stroke-width="1"/>
<line x1="821" x2="1879" y1="646.5" y2="646.5" stroke="#000" stroke-width="1"/>
<line x1="821" x2="1879" y1="807.5" y2="807.5" stroke="#000" stroke-width="1"/>
<defs><clipPath id="cc"><rect x="13" y="83" width="1865" height="742"/></clipPath><clipPath id="ca"><rect x="13" y="828" width="1865" height="158"/></clipPath></defs>
<g clip-path="url(#cc)">
<polyline fill="none" stroke="#92b6d0" stroke-width="1" stroke-linejoin="round" points="13.3,169.8 21.3,168.6 29.3,169.2 37.3,169.4 45.3,167.9 53.3,168.0 61.3,165.9 69.3,163.2 77.3,158.9 85.3,162.9 93.3,170.9 101.3,191.5 109.3,220.8 117.3,259.1 125.3,309.6 133.3,354.5 141.3,357.6 149.3,375.4 157.3,378.7 165.3,385.1 173.3,396.4 181.3,409.6 189.3,426.1 197.3,449.6 205.3,471.6 213.3,480.5 221.3,479.5 229.3,483.4 237.3,479.1 245.3,471.4 253.3,468.8 261.3,466.7 269.3,463.6 277.3,459.2 285.3,438.7 293.3,423.9 301.3,413.1 309.3,402.9 317.3,401.1 325.3,402.6 333.3,406.5 341.3,412.0 349.3,411.3 357.3,406.3 365.3,402.6 373.3,397.8 381.3,394.2 389.3,389.0 397.3,389.6 405.3,389.7 413.3,392.6 421.3,390.6 429.3,385.4 437.3,388.3 445.3,388.9 453.3,389.3 461.3,389.6 469.3,389.9 477.3,388.4 485.3,388.9 493.3,375.8 501.3,375.0 509.3,373.8 517.3,367.5 525.3,364.3 533.3,356.9 541.3,355.2 549.3,353.8 557.3,354.4 565.3,354.2 573.3,353.3 581.3,353.0 589.3,351.4 597.3,346.5 605.3,347.5 613.3,351.0 621.3,354.4 629.3,358.0 637.3,358.8 645.3,359.0 653.3,356.0 661.3,350.0 669.3,347.3 677.3,340.1 685.3,338.7 693.3,337.2 701.3,332.6 709.3,324.8 717.3,318.6 725.3,309.7 733.3,288.4 741.3,275.9 749.3,262.0 757.3,244.2 765.3,222.6 773.3,200.6 781.3,187.2 789.3,178.1 797.3,163.2 805.3,149.1 813.3,128.6 821.3,117.7 829.3,116.0 837.3,112.9 845.3,111.4 853.3,117.5 861.3,123.9 869.3,124.6 877.3,120.5 885.3,107.7 893.3,102.2 901.3,99.4 909.3,98.4 917.3,99.3 925.3,97.0 933.3,94.4 941.3,66.0 949.3,39.8 957.3,18.3 965.3,11.7 973.3,28.8 981.3,49.2 989.3,70.6 997.3,101.1 1005.3,143.4 1013.3,178.8 1021.3,210.5 1029.3,235.4 1037.3,259.7 1045.3,278.7 1053.3,308.8 1061.3,347.4 1069.3,397.0 1077.3,466.1 1085.3,522.5 1093.3,577.0 1101.3,585.5 1109.3,587.1 1117.3,585.5 1125.3,586.2 1133.3,583.6 1141.3,582.7 1149.3,582.5 1157.3,590.8 1165.3,607.1 1173.3,625.5 1181.3,637.5 1189.3,641.8 1197.3,651.2 1205.3,654.6 1213.3,671.0 1221.3,676.8 1229.3,678.4 1237.3,686.3 1245.3,697.4 1253.3,697.6 1261.3,699.0 1269.3,701.7 1277.3,701.4 1285.3,701.9 1293.3,702.7 1301.3,704.1 1309.3,704.3 1317.3,706.0 1325.3,708.9 1333.3,710.2 1341.3,702.0 1349.3,686.5 1357.3,677.5 1365.3,665.8 1373.3,645.2 1381.3,627.0 1389.3,613.2 1397.3,603.8 1405.3,594.1 1413.3,579.2 1421.3,565.9 1429.3,543.0 1437.3,515.7 1445.3,503.9 1453.3,490.9 1461.3,481.1 1469.3,474.2 1477.3,472.0 1485.3,470.5 1493.3,469.0 1501.3,465.0 1509.3,461.7" />
<polyline fill="none" stroke="#92b6d0" stroke-width="1" stroke-linejoin="round" points="13.3,496.2 21.3,500.3 29.3,498.5 37.3,498.0 45.3,505.6 53.3,519.6 61.3,541.7 69.3,561.9 77.3,583.1 85.3,609.4 93.3,629.3 101.3,636.3 109.3,636.2 117.3,634.7 125.3,618.8 133.3,606.9 141.3,619.5 149.3,621.1 157.3,636.0 165.3,644.2 173.3,650.5 181.3,654.9 189.3,649.2 197.3,638.1 205.3,627.1 213.3,621.5 221.3,622.0 229.3,621.1 237.3,622.6 245.3,622.5 253.3,621.4 261.3,622.0 269.3,623.1 277.3,620.9 285.3,629.2 293.3,629.4 301.3,625.8 309.3,623.2 317.3,608.2 325.3,595.9 333.3,578.8 341.3,557.9 349.3,552.3 357.3,547.0 365.3,539.3 373.3,538.4 381.3,535.3 389.3,525.9 397.3,520.6 405.3,516.2 413.3,504.4 421.3,496.8 429.3,491.6 437.3,479.6 445.3,482.7 453.3,484.8 461.3,485.7 469.3,486.0 477.3,485.2 485.3,478.4 493.3,480.9 501.3,479.1 509.3,473.8 517.3,475.1 525.3,475.1 533.3,476.3 541.3,474.7 549.3,475.1 557.3,470.1 565.3,465.3 573.3,463.0 581.3,462.9 589.3,463.3 597.3,463.8 605.3,454.7 613.3,445.1 621.3,435.7 629.3,427.1 637.3,422.3 645.3,418.3 653.3,420.2 661.3,418.5 669.3,417.1 677.3,420.2 685.3,419.1 693.3,419.5 701.3,418.4 709.3,420.5 717.3,417.8 725.3,417.6 733.3,424.9 741.3,424.4 749.3,426.8 757.3,431.7 765.3,436.3 773.3,437.6 781.3,433.0 789.3,424.6 797.3,419.2 805.3,412.4 813.3,411.8 821.3,405.4 829.3,392.1 837.3,381.6 845.3,363.9 853.3,345.4 861.3,331.8 869.3,330.6 877.3,337.4 885.3,358.6 893.3,373.5 901.3,382.7 909.3,389.6 917.3,395.7 925.3,416.0 933.3,443.5 941.3,510.2 949.3,579.9 957.3,656.4 965.3,720.0 973.3,758.1 981.3,788.6 989.3,812.0 997.3,823.1 1005.3,822.7 1013.3,823.8 1021.3,828.0 1029.3,838.1 1037.3,843.9 1045.3,853.6 1053.3,851.5 1061.3,846.1 1069.3,835.7 1077.3,803.6 1085.3,775.3 1093.3,749.7 1101.3,754.9 1109.3,759.2 1117.3,762.4 1125.3,761.0 1133.3,769.2 1141.3,776.1 1149.3,786.3 1157.3,790.2 1165.3,787.2 1173.3,781.3 1181.3,777.6 1189.3,778.2 1197.3,778.2 1205.3,782.9 1213.3,780.1 1221.3,786.6 1229.3,789.9 1237.3,792.3 1245.3,793.4 1253.3,799.5 1261.3,799.5 1269.3,798.3 1277.3,798.2 1285.3,803.3 1293.3,804.7 1301.3,807.2 1309.3,808.2 1317.3,808.7 1325.3,808.0 1333.3,807.4 1341.3,812.7 1349.3,822.3 1357.3,825.6 1365.3,828.6 1373.3,835.4 1381.3,836.8 1389.3,837.7 1397.3,833.3 1405.3,826.3 1413.3,821.3 1421.3,820.0 1429.3,825.0 1437.3,829.3 1445.3,816.8 1453.3,806.3 1461.3,790.7 1469.3,772.9 1477.3,752.3 1485.3,731.4 1493.3,711.6 1501.3,699.3 1509.3,689.1" />
<polyline fill="none" stroke="#92b6d0" stroke-width="1" stroke-linejoin="round" points="13.3,333.0 21.3,334.4 29.3,333.9 37.3,333.7 45.3,336.8 53.3,343.8 61.3,353.8 69.3,362.6 77.3,371.0 85.3,386.2 93.3,400.1 101.3,413.9 109.3,428.5 117.3,446.9 125.3,464.2 133.3,480.7 141.3,488.5 149.3,498.2 157.3,507.3 165.3,514.6 173.3,523.5 181.3,532.2 189.3,537.6 197.3,543.9 205.3,549.4 213.3,551.0 221.3,550.8 229.3,552.2 237.3,550.9 245.3,547.0 253.3,545.1 261.3,544.4 269.3,543.4 277.3,540.0 285.3,534.0 293.3,526.6 301.3,519.5 309.3,513.0 317.3,504.6 325.3,499.2 333.3,492.6 341.3,484.9 349.3,481.8 357.3,476.6 365.3,470.9 373.3,468.1 381.3,464.8 389.3,457.4 397.3,455.1 405.3,452.9 413.3,448.5 421.3,443.7 429.3,438.5 437.3,433.9 445.3,435.8 453.3,437.1 461.3,437.6 469.3,437.9 477.3,436.8 485.3,433.6 493.3,428.4 501.3,427.1 509.3,423.8 517.3,421.3 525.3,419.7 533.3,416.6 541.3,414.9 549.3,414.4 557.3,412.2 565.3,409.8 573.3,408.1 581.3,407.9 589.3,407.4 597.3,405.1 605.3,401.1 613.3,398.1 621.3,395.1 629.3,392.6 637.3,390.6 645.3,388.6 653.3,388.1 661.3,384.2 669.3,382.2 677.3,380.1 685.3,378.9 693.3,378.4 701.3,375.5 709.3,372.6 717.3,368.2 725.3,363.6 733.3,356.6 741.3,350.1 749.3,344.4 757.3,337.9 765.3,329.4 773.3,319.1 781.3,310.1 789.3,301.4 797.3,291.2 805.3,280.8 813.3,270.2 821.3,261.6 829.3,254.1 837.3,247.2 845.3,237.7 853.3,231.4 861.3,227.8 869.3,227.6 877.3,228.9 885.3,233.2 893.3,237.8 901.3,241.1 909.3,244.0 917.3,247.5 925.3,256.5 933.3,268.9 941.3,288.1 949.3,309.9 957.3,337.4 965.3,365.9 973.3,393.4 981.3,418.9 989.3,441.3 997.3,462.1 1005.3,483.1 1013.3,501.3 1021.3,519.2 1029.3,536.8 1037.3,551.8 1045.3,566.1 1053.3,580.1 1061.3,596.8 1069.3,616.4 1077.3,634.9 1085.3,648.9 1093.3,663.4 1101.3,670.2 1109.3,673.1 1117.3,674.0 1125.3,673.6 1133.3,676.4 1141.3,679.4 1149.3,684.4 1157.3,690.5 1165.3,697.1 1173.3,703.4 1181.3,707.5 1189.3,710.0 1197.3,714.7 1205.3,718.8 1213.3,725.5 1221.3,731.7 1229.3,734.1 1237.3,739.3 1245.3,745.4 1253.3,748.5 1261.3,749.2 1269.3,750.0 1277.3,749.8 1285.3,752.6 1293.3,753.7 1301.3,755.6 1309.3,756.2 1317.3,757.4 1325.3,758.5 1333.3,758.8 1341.3,757.4 1349.3,754.4 1357.3,751.5 1365.3,747.2 1373.3,740.3 1381.3,731.9 1389.3,725.5 1397.3,718.5 1405.3,710.2 1413.3,700.2 1421.3,693.0 1429.3,684.0 1437.3,672.5 1445.3,660.4 1453.3,648.6 1461.3,635.9 1469.3,623.5 1477.3,612.1 1485.3,601.0 1493.3,590.3 1501.3,582.1 1509.3,575.4" />
<line x1="821" y1="118" x2="1045" y2="807" stroke="#d02020" stroke-width="1" stroke-dasharray="2,3"/>
<line x1="13.5" x2="13.5" y1="387" y2="468" stroke="#30c030" stroke-width="1"/>
<rect x="11" y="422" width="5" height="8.0" fill="#10e010"/>
<line x1="21.5" x2="21.5" y1="388" y2="433" stroke="#30c030" stroke-width="1"/>
<rect x="19" y="424" width="5" height="7.0" fill="#10e010"/>
<line x1="29.5" x2="29.5" y1="402" y2="438" stroke="#30c030" stroke-width="1"/>
<rect x="27" y="421" width="5" height="5.0" fill="#10e010"/>
<line x1="37.5" x2="37.5" y1="372" y2="425" stroke="#30c030" stroke-width="1"/>
<rect x="35" y="407" width="5" height="14.0" fill="#10e010"/>
<line x1="45.5" x2="45.5" y1="394" y2="441" stroke="#c01818" stroke-width="1"/>
<rect x="43" y="407" width="5" height="20.0" fill="#f01010"/>
<line x1="53.5" x2="53.5" y1="412" y2="466" stroke="#c01818" stroke-width="1"/>
<rect x="51" y="427" width="5" height="26.0" fill="#f01010"/>
<line x1="61.5" x2="61.5" y1="447" y2="513" stroke="#c01818" stroke-width="1"/>
<rect x="59" y="452" width="5" height="52.0" fill="#f01010"/>
<line x1="69.5" x2="69.5" y1="482" y2="553" stroke="#c01818" stroke-width="1"/>
<rect x="67" y="504" width="5" height="5.0" fill="#f01010"/>
<line x1="77.5" x2="77.5" y1="489" y2="533" stroke="#c01818" stroke-width="1"/>
<rect x="75" y="509" width="5" height="20.0" fill="#f01010"/>
<line x1="85.5" x2="85.5" y1="518" y2="576" stroke="#c01818" stroke-width="1"/>
<rect x="83" y="528" width="5" height="42.0" fill="#f01010"/>
<line x1="93.5" x2="93.5" y1="551" y2="573" stroke="#30c030" stroke-width="1"/>
<rect x="91" y="557" width="5" height="14.0" fill="#10e010"/>
<line x1="101.5" x2="101.5" y1="509" y2="564" stroke="#30c030" stroke-width="1"/>
<rect x="99" y="517" width="5" height="44.0" fill="#10e010"/>
<line x1="109.5" x2="109.5" y1="484" y2="533" stroke="#30c030" stroke-width="1"/>
<rect x="107" y="513" width="5" height="7.0" fill="#10e010"/>
<line x1="117.5" x2="117.5" y1="513" y2="573" stroke="#c01818" stroke-width="1"/>
<rect x="115" y="514" width="5" height="54.0" fill="#f01010"/>
<line x1="125.5" x2="125.5" y1="534" y2="564" stroke="#30c030" stroke-width="1"/>
<rect x="123" y="546" width="5" height="17.0" fill="#10e010"/>
<line x1="133.5" x2="133.5" y1="530" y2="605" stroke="#c01818" stroke-width="1"/>
<rect x="131" y="547" width="5" height="31.0" fill="#f01010"/>
<line x1="141.5" x2="141.5" y1="572" y2="605" stroke="#c01818" stroke-width="1"/>
<rect x="139" y="578" width="5" height="4.0" fill="#f01010"/>
<line x1="149.5" x2="149.5" y1="559" y2="590" stroke="#30c030" stroke-width="1"/>
<rect x="147" y="564" width="5" height="19.0" fill="#10e010"/>
<line x1="157.5" x2="157.5" y1="556" y2="622" stroke="#c01818" stroke-width="1"/>
<rect x="155" y="566" width="5" height="48.0" fill="#f01010"/>
<line x1="165.5" x2="165.5" y1="586" y2="646" stroke="#30c030" stroke-width="1"/>
<rect x="163" y="588" width="5" height="28.0" fill="#10e010"/>
<line x1="173.5" x2="173.5" y1="586" y2="620" stroke="#c01818" stroke-width="1"/>
<rect x="171" y="588" width="5" height="10.0" fill="#f01010"/>
<line x1="181.5" x2="181.5" y1="597" y2="630" stroke="#c01818" stroke-width="1"/>
<rect x="179" y="598" width="5" height="2.0" fill="#f01010"/>
<line x1="189.5" x2="189.5" y1="524" y2="601" stroke="#30c030" stroke-width="1"/>
<rect x="187" y="529" width="5" height="72.0" fill="#10e010"/>
<line x1="197.5" x2="197.5" y1="496" y2="541" stroke="#c01818" stroke-width="1"/>
<rect x="195" y="527" width="5" height="4.0" fill="#f01010"/>
<line x1="205.5" x2="205.5" y1="527" y2="548" stroke="#c01818" stroke-width="1"/>
<rect x="203" y="531" width="5" height="6.0" fill="#f01010"/>
<line x1="213.5" x2="213.5" y1="486" y2="539" stroke="#30c030" stroke-width="1"/>
<rect x="211" y="486" width="5" height="51.0" fill="#10e010"/>
<line x1="221.5" x2="221.5" y1="474" y2="517" stroke="#c01818" stroke-width="1"/>
<rect x="219" y="490" width="5" height="9.0" fill="#f01010"/>
<line x1="229.5" x2="229.5" y1="492" y2="547" stroke="#c01818" stroke-width="1"/>
<rect x="227" y="498" width="5" height="41.0" fill="#f01010"/>
<line x1="237.5" x2="237.5" y1="498" y2="558" stroke="#30c030" stroke-width="1"/>
<rect x="235" y="501" width="5" height="38.0" fill="#10e010"/>
<line x1="245.5" x2="245.5" y1="490" y2="516" stroke="#30c030" stroke-width="1"/>
<rect x="243" y="492" width="5" height="10.0" fill="#10e010"/>
<line x1="253.5" x2="253.5" y1="488" y2="529" stroke="#c01818" stroke-width="1"/>
<rect x="251" y="493" width="5" height="27.0" fill="#f01010"/>
<line x1="261.5" x2="261.5" y1="493" y2="538" stroke="#30c030" stroke-width="1"/>
<rect x="259" y="502" width="5" height="14.0" fill="#10e010"/>
<line x1="269.5" x2="269.5" y1="488" y2="513" stroke="#30c030" stroke-width="1"/>
<rect x="267" y="493" width="5" height="14.0" fill="#10e010"/>
<line x1="277.5" x2="277.5" y1="491" y2="504" stroke="#c01818" stroke-width="1"/>
<rect x="275" y="492" width="5" height="10.0" fill="#f01010"/>
<line x1="285.5" x2="285.5" y1="423" y2="508" stroke="#30c030" stroke-width="1"/>
<rect x="283" y="424" width="5" height="83.0" fill="#10e010"/>
<line x1="293.5" x2="293.5" y1="420" y2="447" stroke="#c01818" stroke-width="1"/>
<rect x="291" y="424" width="5" height="8.0" fill="#f01010"/>
<line x1="301.5" x2="301.5" y1="420" y2="441" stroke="#c01818" stroke-width="1"/>
<rect x="299" y="431" width="5" height="7.0" fill="#f01010"/>
<line x1="309.5" x2="309.5" y1="430" y2="483" stroke="#30c030" stroke-width="1"/>
<rect x="307" y="436" width="5" height="3.0" fill="#10e010"/>
<line x1="317.5" x2="317.5" y1="418" y2="453" stroke="#c01818" stroke-width="1"/>
<rect x="315" y="436" width="5" height="10.0" fill="#f01010"/>
<line x1="325.5" x2="325.5" y1="441" y2="484" stroke="#c01818" stroke-width="1"/>
<rect x="323" y="446" width="5" height="34.0" fill="#f01010"/>
<line x1="333.5" x2="333.5" y1="453" y2="481" stroke="#30c030" stroke-width="1"/>
<rect x="331" y="466" width="5" height="13.0" fill="#10e010"/>
<line x1="341.5" x2="341.5" y1="436" y2="478" stroke="#30c030" stroke-width="1"/>
<rect x="339" y="446" width="5" height="20.0" fill="#10e010"/>
<line x1="349.5" x2="349.5" y1="444" y2="489" stroke="#c01818" stroke-width="1"/>
<rect x="347" y="447" width="5" height="19.0" fill="#f01010"/>
<line x1="357.5" x2="357.5" y1="416" y2="467" stroke="#30c030" stroke-width="1"/>
<rect x="355" y="428" width="5" height="38.0" fill="#10e010"/>
<line x1="365.5" x2="365.5" y1="406" y2="429" stroke="#30c030" stroke-width="1"/>
<rect x="363" y="423" width="5" height="6.0" fill="#10e010"/>
<line x1="373.5" x2="373.5" y1="409" y2="444" stroke="#c01818" stroke-width="1"/>
<rect x="371" y="423" width="5" height="6.0" fill="#f01010"/>
<line x1="381.5" x2="381.5" y1="394" y2="433" stroke="#c01818" stroke-width="1"/>
<rect x="379" y="429" width="5" height="3.0" fill="#f01010"/>
<line x1="389.5" x2="389.5" y1="392" y2="439" stroke="#30c030" stroke-width="1"/>
<rect x="387" y="393" width="5" height="34.0" fill="#10e010"/>
<line x1="397.5" x2="397.5" y1="388" y2="462" stroke="#c01818" stroke-width="1"/>
<rect x="395" y="393" width="5" height="61.0" fill="#f01010"/>
<line x1="405.5" x2="405.5" y1="429" y2="460" stroke="#30c030" stroke-width="1"/>
<rect x="403" y="449" width="5" height="4.0" fill="#10e010"/>
<line x1="413.5" x2="413.5" y1="417" y2="451" stroke="#30c030" stroke-width="1"/>
<rect x="411" y="431" width="5" height="18.0" fill="#10e010"/>
<line x1="421.5" x2="421.5" y1="400" y2="458" stroke="#30c030" stroke-width="1"/>
<rect x="419" y="406" width="5" height="25.0" fill="#10e010"/>
<line x1="429.5" x2="429.5" y1="382" y2="407" stroke="#30c030" stroke-width="1"/>
<rect x="427" y="389" width="5" height="17.0" fill="#10e010"/>
<line x1="437.5" x2="437.5" y1="386" y2="451" stroke="#c01818" stroke-width="1"/>
<rect x="435" y="389" width="5" height="22.0" fill="#f01010"/>
<line x1="445.5" x2="445.5" y1="410" y2="467" stroke="#c01818" stroke-width="1"/>
<rect x="443" y="410" width="5" height="51.0" fill="#f01010"/>
<line x1="453.5" x2="453.5" y1="438" y2="478" stroke="#30c030" stroke-width="1"/>
<rect x="451" y="457" width="5" height="3.0" fill="#10e010"/>
<line x1="461.5" x2="461.5" y1="442" y2="487" stroke="#30c030" stroke-width="1"/>
<rect x="459" y="450" width="5" height="8.0" fill="#10e010"/>
<line x1="469.5" x2="469.5" y1="438" y2="482" stroke="#30c030" stroke-width="1"/>
<rect x="467" y="442" width="5" height="11.0" fill="#10e010"/>
<line x1="477.5" x2="477.5" y1="422" y2="456" stroke="#30c030" stroke-width="1"/>
<rect x="475" y="423" width="5" height="17.0" fill="#10e010"/>
<line x1="485.5" x2="485.5" y1="389" y2="433" stroke="#30c030" stroke-width="1"/>
<rect x="483" y="417" width="5" height="10.0" fill="#10e010"/>
<line x1="493.5" x2="493.5" y1="350" y2="424" stroke="#30c030" stroke-width="1"/>
<rect x="491" y="360" width="5" height="52.0" fill="#10e010"/>
<line x1="501.5" x2="501.5" y1="339" y2="433" stroke="#c01818" stroke-width="1"/>
<rect x="499" y="362" width="5" height="58.0" fill="#f01010"/>
<line x1="509.5" x2="509.5" y1="398" y2="431" stroke="#30c030" stroke-width="1"/>
<rect x="507" y="401" width="5" height="19.0" fill="#10e010"/>
<line x1="517.5" x2="517.5" y1="360" y2="411" stroke="#30c030" stroke-width="1"/>
<rect x="515" y="378" width="5" height="22.0" fill="#10e010"/>
<line x1="525.5" x2="525.5" y1="353" y2="409" stroke="#c01818" stroke-width="1"/>
<rect x="523" y="377" width="5" height="14.0" fill="#f01010"/>
<line x1="533.5" x2="533.5" y1="359" y2="402" stroke="#30c030" stroke-width="1"/>
<rect x="531" y="367" width="5" height="24.0" fill="#10e010"/>
<line x1="541.5" x2="541.5" y1="356" y2="403" stroke="#c01818" stroke-width="1"/>
<rect x="539" y="367" width="5" height="32.0" fill="#f01010"/>
<line x1="549.5" x2="549.5" y1="368" y2="409" stroke="#30c030" stroke-width="1"/>
<rect x="547" y="383" width="5" height="16.0" fill="#10e010"/>
<line x1="557.5" x2="557.5" y1="381" y2="411" stroke="#c01818" stroke-width="1"/>
<rect x="555" y="382" width="5" height="28.0" fill="#f01010"/>
<line x1="565.5" x2="565.5" y1="391" y2="429" stroke="#30c030" stroke-width="1"/>
<rect x="563" y="399" width="5" height="10.0" fill="#10e010"/>
<line x1="573.5" x2="573.5" y1="361" y2="399" stroke="#c01818" stroke-width="1"/>
<rect x="571" y="396" width="5" height="3.0" fill="#f01010"/>
<line x1="581.5" x2="581.5" y1="393" y2="433" stroke="#c01818" stroke-width="1"/>
<rect x="579" y="397" width="5" height="5.0" fill="#f01010"/>
<line x1="589.5" x2="589.5" y1="370" y2="408" stroke="#30c030" stroke-width="1"/>
<rect x="587" y="377" width="5" height="27.0" fill="#10e010"/>
<line x1="597.5" x2="597.5" y1="367" y2="388" stroke="#30c030" stroke-width="1"/>
<rect x="595" y="367" width="5" height="10.0" fill="#10e010"/>
<line x1="605.5" x2="605.5" y1="353" y2="387" stroke="#c01818" stroke-width="1"/>
<rect x="603" y="367" width="5" height="13.0" fill="#f01010"/>
<line x1="613.5" x2="613.5" y1="376" y2="402" stroke="#c01818" stroke-width="1"/>
<rect x="611" y="379" width="5" height="17.0" fill="#f01010"/>
<line x1="621.5" x2="621.5" y1="378" y2="413" stroke="#30c030" stroke-width="1"/>
<rect x="619" y="390" width="5" height="6.0" fill="#10e010"/>
<line x1="629.5" x2="629.5" y1="386" y2="419" stroke="#c01818" stroke-width="1"/>
<rect x="627" y="389" width="5" height="3.0" fill="#f01010"/>
<line x1="637.5" x2="637.5" y1="379" y2="402" stroke="#30c030" stroke-width="1"/>
<rect x="635" y="383" width="5" height="10.0" fill="#10e010"/>
<line x1="645.5" x2="645.5" y1="362" y2="389" stroke="#30c030" stroke-width="1"/>
<rect x="643" y="379" width="5" height="5.0" fill="#10e010"/>
<line x1="653.5" x2="653.5" y1="346" y2="381" stroke="#30c030" stroke-width="1"/>
<rect x="651" y="349" width="5" height="32.0" fill="#10e010"/>
<line x1="661.5" x2="661.5" y1="339" y2="362" stroke="#30c030" stroke-width="1"/>
<rect x="659" y="343" width="5" height="7.0" fill="#10e010"/>
<line x1="669.5" x2="669.5" y1="313" y2="374" stroke="#c01818" stroke-width="1"/>
<rect x="667" y="343" width="5" height="17.0" fill="#f01010"/>
<line x1="677.5" x2="677.5" y1="334" y2="378" stroke="#30c030" stroke-width="1"/>
<rect x="675" y="337" width="5" height="31.0" fill="#10e010"/>
<line x1="685.5" x2="685.5" y1="323" y2="372" stroke="#c01818" stroke-width="1"/>
<rect x="683" y="336" width="5" height="30.0" fill="#f01010"/>
<line x1="693.5" x2="693.5" y1="349" y2="368" stroke="#30c030" stroke-width="1"/>
<rect x="691" y="356" width="5" height="10.0" fill="#10e010"/>
<line x1="701.5" x2="701.5" y1="324" y2="361" stroke="#30c030" stroke-width="1"/>
<rect x="699" y="342" width="5" height="14.0" fill="#10e010"/>
<line x1="709.5" x2="709.5" y1="314" y2="353" stroke="#30c030" stroke-width="1"/>
<rect x="707" y="326" width="5" height="18.0" fill="#10e010"/>
<line x1="717.5" x2="717.5" y1="310" y2="329" stroke="#30c030" stroke-width="1"/>
<rect x="715" y="321" width="5" height="6.0" fill="#10e010"/>
<line x1="725.5" x2="725.5" y1="296" y2="331" stroke="#30c030" stroke-width="1"/>
<rect x="723" y="308" width="5" height="15.0" fill="#10e010"/>
<line x1="733.5" x2="733.5" y1="258" y2="311" stroke="#30c030" stroke-width="1"/>
<rect x="731" y="259" width="5" height="50.0" fill="#10e010"/>
<line x1="741.5" x2="741.5" y1="259" y2="291" stroke="#c01818" stroke-width="1"/>
<rect x="739" y="259" width="5" height="13.0" fill="#f01010"/>
<line x1="749.5" x2="749.5" y1="256" y2="276" stroke="#30c030" stroke-width="1"/>
<rect x="747" y="262" width="5" height="7.0" fill="#10e010"/>
<line x1="757.5" x2="757.5" y1="237" y2="267" stroke="#30c030" stroke-width="1"/>
<rect x="755" y="238" width="5" height="25.0" fill="#10e010"/>
<line x1="765.5" x2="765.5" y1="207" y2="243" stroke="#30c030" stroke-width="1"/>
<rect x="763" y="210" width="5" height="29.0" fill="#10e010"/>
<line x1="773.5" x2="773.5" y1="164" y2="238" stroke="#30c030" stroke-width="1"/>
<rect x="771" y="189" width="5" height="21.0" fill="#10e010"/>
<line x1="781.5" x2="781.5" y1="181" y2="223" stroke="#c01818" stroke-width="1"/>
<rect x="779" y="189" width="5" height="21.0" fill="#f01010"/>
<line x1="789.5" x2="789.5" y1="208" y2="272" stroke="#c01818" stroke-width="1"/>
<rect x="787" y="213" width="5" height="4.0" fill="#f01010"/>
<line x1="797.5" x2="797.5" y1="178" y2="219" stroke="#30c030" stroke-width="1"/>
<rect x="795" y="180" width="5" height="37.0" fill="#10e010"/>
<line x1="805.5" x2="805.5" y1="166" y2="193" stroke="#30c030" stroke-width="1"/>
<rect x="803" y="170" width="5" height="10.0" fill="#10e010"/>
<line x1="813.5" x2="813.5" y1="134" y2="188" stroke="#30c030" stroke-width="1"/>
<rect x="811" y="138" width="5" height="32.0" fill="#10e010"/>
<line x1="821.5" x2="821.5" y1="118" y2="184" stroke="#c01818" stroke-width="1"/>
<rect x="819" y="138" width="5" height="32.0" fill="#f01010"/>
<line x1="829.5" x2="829.5" y1="154" y2="282" stroke="#c01818" stroke-width="1"/>
<rect x="827" y="170" width="5" height="40.0" fill="#f01010"/>
<line x1="837.5" x2="837.5" y1="200" y2="237" stroke="#30c030" stroke-width="1"/>
<rect x="835" y="201" width="5" height="9.0" fill="#10e010"/>
<line x1="845.5" x2="845.5" y1="172" y2="226" stroke="#30c030" stroke-width="1"/>
<rect x="843" y="174" width="5" height="28.0" fill="#10e010"/>
<line x1="853.5" x2="853.5" y1="168" y2="271" stroke="#c01818" stroke-width="1"/>
<rect x="851" y="174" width="5" height="58.0" fill="#f01010"/>
<line x1="861.5" x2="861.5" y1="226" y2="271" stroke="#c01818" stroke-width="1"/>
<rect x="859" y="232" width="5" height="38.0" fill="#f01010"/>
<line x1="869.5" x2="869.5" y1="266" y2="359" stroke="#c01818" stroke-width="1"/>
<rect x="867" y="267" width="5" height="54.0" fill="#f01010"/>
<line x1="877.5" x2="877.5" y1="321" y2="350" stroke="#c01818" stroke-width="1"/>
<rect x="875" y="321" width="5" height="27.0" fill="#f01010"/>
<line x1="885.5" x2="885.5" y1="339" y2="419" stroke="#c01818" stroke-width="1"/>
<rect x="883" y="351" width="5" height="41.0" fill="#f01010"/>
<line x1="893.5" x2="893.5" y1="334" y2="397" stroke="#30c030" stroke-width="1"/>
<rect x="891" y="353" width="5" height="40.0" fill="#10e010"/>
<line x1="901.5" x2="901.5" y1="334" y2="381" stroke="#30c030" stroke-width="1"/>
<rect x="899" y="336" width="5" height="12.0" fill="#10e010"/>
<line x1="909.5" x2="909.5" y1="309" y2="360" stroke="#30c030" stroke-width="1"/>
<rect x="907" y="321" width="5" height="21.0" fill="#10e010"/>
<line x1="917.5" x2="917.5" y1="299" y2="339" stroke="#30c030" stroke-width="1"/>
<rect x="915" y="308" width="5" height="10.0" fill="#10e010"/>
<line x1="925.5" x2="925.5" y1="308" y2="394" stroke="#c01818" stroke-width="1"/>
<rect x="923" y="308" width="5" height="82.0" fill="#f01010"/>
<line x1="933.5" x2="933.5" y1="397" y2="462" stroke="#c01818" stroke-width="1"/>
<rect x="931" y="398" width="5" height="40.0" fill="#f01010"/>
<line x1="941.5" x2="941.5" y1="432" y2="693" stroke="#c01818" stroke-width="1"/>
<rect x="939" y="437" width="5" height="156.0" fill="#f01010"/>
<line x1="949.5" x2="949.5" y1="580" y2="701" stroke="#c01818" stroke-width="1"/>
<rect x="947" y="593" width="5" height="59.0" fill="#f01010"/>
<line x1="957.5" x2="957.5" y1="653" y2="740" stroke="#c01818" stroke-width="1"/>
<rect x="955" y="654" width="5" height="76.0" fill="#f01010"/>
<line x1="965.5" x2="965.5" y1="691" y2="800" stroke="#c01818" stroke-width="1"/>
<rect x="963" y="723" width="5" height="17.0" fill="#f01010"/>
<line x1="973.5" x2="973.5" y1="678" y2="764" stroke="#30c030" stroke-width="1"/>
<rect x="971" y="690" width="5" height="49.0" fill="#10e010"/>
<line x1="981.5" x2="981.5" y1="662" y2="733" stroke="#30c030" stroke-width="1"/>
<rect x="979" y="679" width="5" height="12.0" fill="#10e010"/>
<line x1="989.5" x2="989.5" y1="628" y2="693" stroke="#30c030" stroke-width="1"/>
<rect x="987" y="658" width="5" height="23.0" fill="#10e010"/>
<line x1="997.5" x2="997.5" y1="608" y2="673" stroke="#30c030" stroke-width="1"/>
<rect x="995" y="617" width="5" height="42.0" fill="#10e010"/>
<line x1="1005.5" x2="1005.5" y1="571" y2="633" stroke="#30c030" stroke-width="1"/>
<rect x="1003" y="593" width="5" height="24.0" fill="#10e010"/>
<line x1="1013.5" x2="1013.5" y1="587" y2="654" stroke="#c01818" stroke-width="1"/>
<rect x="1011" y="593" width="5" height="4.0" fill="#f01010"/>
<line x1="1021.5" x2="1021.5" y1="570" y2="638" stroke="#c01818" stroke-width="1"/>
<rect x="1019" y="593" width="5" height="36.0" fill="#f01010"/>
<line x1="1029.5" x2="1029.5" y1="621" y2="691" stroke="#c01818" stroke-width="1"/>
<rect x="1027" y="629" width="5" height="42.0" fill="#f01010"/>
<line x1="1037.5" x2="1037.5" y1="622" y2="691" stroke="#30c030" stroke-width="1"/>
<rect x="1035" y="649" width="5" height="22.0" fill="#10e010"/>
<line x1="1045.5" x2="1045.5" y1="629" y2="693" stroke="#c01818" stroke-width="1"/>
<rect x="1043" y="651" width="5" height="28.0" fill="#f01010"/>
<line x1="1053.5" x2="1053.5" y1="633" y2="681" stroke="#30c030" stroke-width="1"/>
<rect x="1051" y="633" width="5" height="46.0" fill="#10e010"/>
<line x1="1061.5" x2="1061.5" y1="633" y2="669" stroke="#c01818" stroke-width="1"/>
<rect x="1059" y="647" width="5" height="21.0" fill="#f01010"/>
<line x1="1069.5" x2="1069.5" y1="664" y2="717" stroke="#c01818" stroke-width="1"/>
<rect x="1067" y="671" width="5" height="42.0" fill="#f01010"/>
<line x1="1077.5" x2="1077.5" y1="678" y2="730" stroke="#30c030" stroke-width="1"/>
<rect x="1075" y="678" width="5" height="39.0" fill="#10e010"/>
<line x1="1085.5" x2="1085.5" y1="658" y2="692" stroke="#30c030" stroke-width="1"/>
<rect x="1083" y="671" width="5" height="6.0" fill="#10e010"/>
<line x1="1093.5" x2="1093.5" y1="664" y2="758" stroke="#c01818" stroke-width="1"/>
<rect x="1091" y="668" width="5" height="59.0" fill="#f01010"/>
<line x1="1101.5" x2="1101.5" y1="707" y2="739" stroke="#c01818" stroke-width="1"/>
<rect x="1099" y="726" width="5" height="4.0" fill="#f01010"/>
<line x1="1109.5" x2="1109.5" y1="701" y2="736" stroke="#30c030" stroke-width="1"/>
<rect x="1107" y="711" width="5" height="19.0" fill="#10e010"/>
<line x1="1117.5" x2="1117.5" y1="701" y2="748" stroke="#c01818" stroke-width="1"/>
<rect x="1115" y="711" width="5" height="35.0" fill="#f01010"/>
<line x1="1125.5" x2="1125.5" y1="719" y2="753" stroke="#30c030" stroke-width="1"/>
<rect x="1123" y="733" width="5" height="11.0" fill="#10e010"/>
<line x1="1133.5" x2="1133.5" y1="723" y2="759" stroke="#c01818" stroke-width="1"/>
<rect x="1131" y="733" width="5" height="13.0" fill="#f01010"/>
<line x1="1141.5" x2="1141.5" y1="718" y2="747" stroke="#30c030" stroke-width="1"/>
<rect x="1139" y="739" width="5" height="8.0" fill="#10e010"/>
<line x1="1149.5" x2="1149.5" y1="724" y2="763" stroke="#c01818" stroke-width="1"/>
<rect x="1147" y="739" width="5" height="19.0" fill="#f01010"/>
<line x1="1157.5" x2="1157.5" y1="724" y2="762" stroke="#30c030" stroke-width="1"/>
<rect x="1155" y="739" width="5" height="20.0" fill="#10e010"/>
<line x1="1165.5" x2="1165.5" y1="711" y2="742" stroke="#30c030" stroke-width="1"/>
<rect x="1163" y="726" width="5" height="5.0" fill="#10e010"/>
<line x1="1173.5" x2="1173.5" y1="713" y2="778" stroke="#30c030" stroke-width="1"/>
<rect x="1171" y="722" width="5" height="5.0" fill="#10e010"/>
<line x1="1181.5" x2="1181.5" y1="689" y2="720" stroke="#30c030" stroke-width="1"/>
<rect x="1179" y="712" width="5" height="8.0" fill="#10e010"/>
<line x1="1189.5" x2="1189.5" y1="709" y2="738" stroke="#c01818" stroke-width="1"/>
<rect x="1187" y="712" width="5" height="8.0" fill="#f01010"/>
<line x1="1197.5" x2="1197.5" y1="717" y2="750" stroke="#c01818" stroke-width="1"/>
<rect x="1195" y="719" width="5" height="24.0" fill="#f01010"/>
<line x1="1205.5" x2="1205.5" y1="742" y2="766" stroke="#c01818" stroke-width="1"/>
<rect x="1203" y="743" width="5" height="17.0" fill="#f01010"/>
<line x1="1213.5" x2="1213.5" y1="736" y2="774" stroke="#c01818" stroke-width="1"/>
<rect x="1211" y="762" width="5" height="7.0" fill="#f01010"/>
<line x1="1221.5" x2="1221.5" y1="763" y2="807" stroke="#c01818" stroke-width="1"/>
<rect x="1219" y="774" width="5" height="17.0" fill="#f01010"/>
<line x1="1229.5" x2="1229.5" y1="753" y2="807" stroke="#30c030" stroke-width="1"/>
<rect x="1227" y="762" width="5" height="29.0" fill="#10e010"/>
<line x1="1237.5" x2="1237.5" y1="757" y2="793" stroke="#c01818" stroke-width="1"/>
<rect x="1235" y="762" width="5" height="19.0" fill="#f01010"/>
<line x1="1245.5" x2="1245.5" y1="777" y2="796" stroke="#c01818" stroke-width="1"/>
<rect x="1243" y="782" width="5" height="11.0" fill="#f01010"/>
<line x1="1253.5" x2="1253.5" y1="787" y2="804" stroke="#30c030" stroke-width="1"/>
<rect x="1251" y="790" width="5" height="6.0" fill="#10e010"/>
<line x1="1261.5" x2="1261.5" y1="738" y2="793" stroke="#30c030" stroke-width="1"/>
<rect x="1259" y="744" width="5" height="46.0" fill="#10e010"/>
<line x1="1269.5" x2="1269.5" y1="722" y2="746" stroke="#30c030" stroke-width="1"/>
<rect x="1267" y="726" width="5" height="18.0" fill="#10e010"/>
<line x1="1277.5" x2="1277.5" y1="722" y2="743" stroke="#c01818" stroke-width="1"/>
<rect x="1275" y="724" width="5" height="18.0" fill="#f01010"/>
<line x1="1285.5" x2="1285.5" y1="737" y2="791" stroke="#c01818" stroke-width="1"/>
<rect x="1283" y="743" width="5" height="46.0" fill="#f01010"/>
<line x1="1293.5" x2="1293.5" y1="768" y2="797" stroke="#30c030" stroke-width="1"/>
<rect x="1291" y="768" width="5" height="21.0" fill="#10e010"/>
<line x1="1301.5" x2="1301.5" y1="763" y2="787" stroke="#c01818" stroke-width="1"/>
<rect x="1299" y="764" width="5" height="14.0" fill="#f01010"/>
<line x1="1309.5" x2="1309.5" y1="767" y2="786" stroke="#30c030" stroke-width="1"/>
<rect x="1307" y="770" width="5" height="9.0" fill="#10e010"/>
<line x1="1317.5" x2="1317.5" y1="753" y2="762" stroke="#c01818" stroke-width="1"/>
<rect x="1315" y="756" width="5" height="5.0" fill="#f01010"/>
<line x1="1325.5" x2="1325.5" y1="741" y2="767" stroke="#30c030" stroke-width="1"/>
<rect x="1323" y="748" width="5" height="10.0" fill="#10e010"/>
<line x1="1333.5" x2="1333.5" y1="726" y2="762" stroke="#30c030" stroke-width="1"/>
<rect x="1331" y="729" width="5" height="27.0" fill="#10e010"/>
<line x1="1341.5" x2="1341.5" y1="683" y2="733" stroke="#30c030" stroke-width="1"/>
<rect x="1339" y="683" width="5" height="48.0" fill="#10e010"/>
<line x1="1349.5" x2="1349.5" y1="661" y2="686" stroke="#30c030" stroke-width="1"/>
<rect x="1347" y="661" width="5" height="23.0" fill="#10e010"/>
<line x1="1357.5" x2="1357.5" y1="647" y2="699" stroke="#c01818" stroke-width="1"/>
<rect x="1355" y="661" width="5" height="25.0" fill="#f01010"/>
<line x1="1365.5" x2="1365.5" y1="658" y2="693" stroke="#30c030" stroke-width="1"/>
<rect x="1363" y="673" width="5" height="15.0" fill="#10e010"/>
<line x1="1373.5" x2="1373.5" y1="618" y2="680" stroke="#30c030" stroke-width="1"/>
<rect x="1371" y="631" width="5" height="42.0" fill="#10e010"/>
<line x1="1381.5" x2="1381.5" y1="602" y2="633" stroke="#30c030" stroke-width="1"/>
<rect x="1379" y="623" width="5" height="9.0" fill="#10e010"/>
<line x1="1389.5" x2="1389.5" y1="614" y2="652" stroke="#c01818" stroke-width="1"/>
<rect x="1387" y="623" width="5" height="10.0" fill="#f01010"/>
<line x1="1397.5" x2="1397.5" y1="617" y2="646" stroke="#c01818" stroke-width="1"/>
<rect x="1395" y="633" width="5" height="10.0" fill="#f01010"/>
<line x1="1405.5" x2="1405.5" y1="613" y2="646" stroke="#30c030" stroke-width="1"/>
<rect x="1403" y="626" width="5" height="18.0" fill="#10e010"/>
<line x1="1413.5" x2="1413.5" y1="587" y2="624" stroke="#30c030" stroke-width="1"/>
<rect x="1411" y="591" width="5" height="31.0" fill="#10e010"/>
<line x1="1421.5" x2="1421.5" y1="587" y2="613" stroke="#c01818" stroke-width="1"/>
<rect x="1419" y="591" width="5" height="7.0" fill="#f01010"/>
<line x1="1429.5" x2="1429.5" y1="547" y2="600" stroke="#30c030" stroke-width="1"/>
<rect x="1427" y="547" width="5" height="51.0" fill="#10e010"/>
<line x1="1437.5" x2="1437.5" y1="512" y2="557" stroke="#30c030" stroke-width="1"/>
<rect x="1435" y="512" width="5" height="32.0" fill="#10e010"/>
<line x1="1445.5" x2="1445.5" y1="509" y2="547" stroke="#c01818" stroke-width="1"/>
<rect x="1443" y="512" width="5" height="34.0" fill="#f01010"/>
<line x1="1453.5" x2="1453.5" y1="524" y2="561" stroke="#30c030" stroke-width="1"/>
<rect x="1451" y="533" width="5" height="15.0" fill="#10e010"/>
<line x1="1461.5" x2="1461.5" y1="516" y2="547" stroke="#30c030" stroke-width="1"/>
<rect x="1459" y="524" width="5" height="12.0" fill="#10e010"/>
<line x1="1469.5" x2="1469.5" y1="518" y2="538" stroke="#30c030" stroke-width="1"/>
<rect x="1467" y="523" width="5" height="3.0" fill="#10e010"/>
<line x1="1477.5" x2="1477.5" y1="517" y2="538" stroke="#c01818" stroke-width="1"/>
<rect x="1475" y="523" width="5" height="10.0" fill="#f01010"/>
<line x1="1485.5" x2="1485.5" y1="513" y2="533" stroke="#30c030" stroke-width="1"/>
<rect x="1483" y="524" width="5" height="7.0" fill="#10e010"/>
<line x1="1493.5" x2="1493.5" y1="515" y2="522" stroke="#30c030" stroke-width="1"/>
<rect x="1491" y="516" width="5" height="3.0" fill="#10e010"/>
<line x1="1501.5" x2="1501.5" y1="514" y2="533" stroke="#c01818" stroke-width="1"/>
<rect x="1499" y="515" width="5" height="5.0" fill="#f01010"/>
<line x1="1509.5" x2="1509.5" y1="514" y2="530" stroke="#c01818" stroke-width="1"/>
<rect x="1507" y="520" width="5" height="6.0" fill="#f01010"/>
<polyline fill="none" stroke="#8b4a1c" stroke-width="2.1" stroke-linejoin="round" points="12.0,350.0 72.0,357.0 102.0,365.0 150.0,377.0 197.0,387.0 232.0,393.0 292.0,399.0 352.0,403.0 464.0,405.5 576.0,404.0 688.0,400.0 760.0,392.0 800.0,382.0 856.0,369.0 930.0,367.0 973.0,382.0 1062.0,409.0 1160.0,445.0 1260.0,480.0 1300.0,496.5 1335.0,507.5 1383.0,515.8 1410.0,519.7 1512.0,520.5" />
<line x1="1405" x2="1512" y1="520.6" y2="520.6" stroke="#8b4a1c" stroke-width="3"/>
<polyline fill="none" stroke="#1a7c7a" stroke-width="2.1" stroke-linejoin="round" points="13.3,361.1 21.3,366.8 29.3,371.7 37.3,374.9 45.3,379.7 53.3,386.3 61.3,397.0 69.3,407.2 77.3,418.3 85.3,432.1 93.3,443.4 101.3,450.1 109.3,455.8 117.3,466.0 125.3,473.3 133.3,482.8 141.3,491.8 149.3,498.4 157.3,508.9 165.3,516.1 173.3,523.5 181.3,530.5 189.3,530.4 197.3,530.4 205.3,531.0 213.3,526.9 221.3,524.4 229.3,525.7 237.3,523.5 245.3,520.6 253.3,520.6 261.3,518.9 269.3,516.5 277.3,515.2 285.3,506.9 293.3,500.1 301.3,494.4 309.3,489.1 317.3,485.2 325.3,484.7 333.3,483.0 341.3,479.7 349.3,478.4 357.3,473.8 365.3,469.2 373.3,465.6 381.3,462.5 389.3,456.2 397.3,456.0 405.3,455.4 413.3,453.1 421.3,448.9 429.3,443.4 437.3,440.5 445.3,442.3 453.3,443.7 461.3,444.2 469.3,444.0 477.3,442.1 485.3,439.8 493.3,432.6 501.3,431.4 509.3,428.7 517.3,424.1 525.3,421.1 533.3,416.1 541.3,414.6 549.3,411.7 557.3,411.6 565.3,410.4 573.3,409.4 581.3,408.7 589.3,405.8 597.3,402.3 605.3,400.3 613.3,399.9 621.3,399.0 629.3,398.3 637.3,397.0 645.3,395.3 653.3,391.1 661.3,386.7 669.3,384.3 677.3,380.0 685.3,378.7 693.3,376.7 701.3,373.5 709.3,369.2 717.3,364.8 725.3,359.6 733.3,350.5 741.3,343.4 749.3,336.0 757.3,327.1 765.3,316.4 773.3,304.8 781.3,296.2 789.3,289.0 797.3,279.1 805.3,269.2 813.3,257.3 821.3,249.3 829.3,245.8 837.3,241.7 845.3,235.5 853.3,235.2 861.3,238.4 869.3,245.9 877.3,255.2 885.3,267.6 893.3,275.4 901.3,280.9 909.3,284.5 917.3,286.7 925.3,296.1 933.3,309.0 941.3,334.8 949.3,363.6 957.3,396.9 965.3,428.1 973.3,451.9 981.3,472.6 989.3,489.4 997.3,501.0 1005.3,509.4 1013.3,517.3 1021.3,527.5 1029.3,540.5 1037.3,550.4 1045.3,562.1 1053.3,568.5 1061.3,577.6 1069.3,589.9 1077.3,597.9 1085.3,604.5 1093.3,615.7 1101.3,626.1 1109.3,633.8 1117.3,644.0 1125.3,652.1 1133.3,660.6 1141.3,667.7 1149.3,676.0 1157.3,681.7 1165.3,685.7 1173.3,689.0 1181.3,691.1 1189.3,693.7 1197.3,698.2 1205.3,703.8 1213.3,709.8 1221.3,717.1 1229.3,721.2 1237.3,726.7 1245.3,732.7 1253.3,737.9 1261.3,738.4 1269.3,737.3 1277.3,737.7 1285.3,742.4 1293.3,744.7 1301.3,747.8 1309.3,749.8 1317.3,750.8 1325.3,750.5 1333.3,748.6 1341.3,742.6 1349.3,735.2 1357.3,730.7 1365.3,725.5 1373.3,716.9 1381.3,708.4 1389.3,701.5 1397.3,696.2 1405.3,689.8 1413.3,680.8 1421.3,673.3 1429.3,661.8 1437.3,648.2 1445.3,638.9 1453.3,629.3 1461.3,619.7 1469.3,610.9 1477.3,603.8 1485.3,596.6 1493.3,589.2 1501.3,583.0 1509.3,577.8" />
<polyline fill="none" stroke="#dd1010" stroke-width="2.1" stroke-linejoin="round" points="13.3,386.0 21.3,395.5 29.3,401.9 37.3,403.2 45.3,409.1 53.3,420.1 61.3,441.1 69.3,458.0 77.3,475.8 85.3,499.3 93.3,513.8 101.3,514.6 109.3,514.2 117.3,527.6 125.3,532.2 133.3,543.7 141.3,553.3 149.3,555.9 157.3,570.5 165.3,574.8 173.3,580.6 181.3,585.5 189.3,571.4 197.3,561.3 205.3,555.2 213.3,537.9 221.3,528.2 229.3,530.9 237.3,523.4 245.3,515.6 253.3,516.7 261.3,513.0 269.3,508.0 277.3,506.5 285.3,485.9 293.3,472.4 301.3,463.8 309.3,456.9 317.3,454.1 325.3,460.6 333.3,462.0 341.3,458.0 349.3,460.0 357.3,452.0 365.3,444.7 373.3,440.8 381.3,438.6 389.3,427.2 397.3,433.9 405.3,437.7 413.3,436.0 421.3,428.5 429.3,418.6 437.3,416.7 445.3,427.8 453.3,435.1 461.3,438.8 469.3,439.6 477.3,435.5 485.3,430.8 493.3,413.1 501.3,414.9 509.3,411.4 517.3,403.0 525.3,400.0 533.3,391.8 541.3,393.6 549.3,390.9 557.3,395.7 565.3,396.5 573.3,397.1 581.3,398.4 589.3,393.0 597.3,386.5 605.3,384.9 613.3,387.7 621.3,388.2 629.3,389.2 637.3,387.6 645.3,385.5 653.3,376.4 661.3,368.0 669.3,366.0 677.3,358.8 685.3,360.6 693.3,359.4 701.3,355.1 709.3,347.8 717.3,341.1 725.3,332.8 733.3,314.4 741.3,303.8 749.3,293.3 757.3,279.5 765.3,262.1 773.3,243.8 781.3,235.4 789.3,230.8 797.3,218.1 805.3,206.1 813.3,189.1 821.3,184.3 829.3,190.7 837.3,193.3 845.3,188.5 853.3,199.3 861.3,217.0 869.3,243.0 877.3,269.3 885.3,299.9 893.3,313.2 901.3,318.9 909.3,319.4 917.3,316.6 925.3,334.9 933.3,360.7 941.3,418.8 949.3,477.1 957.3,540.3 965.3,590.2 973.3,615.2 981.3,631.1 989.3,637.8 997.3,632.6 1005.3,622.7 1013.3,616.3 1021.3,619.5 1029.3,632.4 1037.3,636.5 1045.3,647.1 1053.3,643.6 1061.3,649.7 1069.3,665.5 1077.3,668.6 1085.3,669.2 1093.3,683.7 1101.3,695.3 1109.3,699.2 1117.3,710.9 1125.3,716.4 1133.3,723.8 1141.3,727.6 1149.3,735.2 1157.3,736.2 1165.3,733.6 1173.3,730.7 1181.3,726.0 1189.3,724.5 1197.3,729.1 1205.3,736.9 1213.3,744.9 1221.3,756.4 1229.3,757.8 1237.3,763.6 1245.3,771.0 1253.3,775.7 1261.3,767.8 1269.3,757.3 1277.3,753.5 1285.3,762.4 1293.3,763.8 1301.3,767.3 1309.3,768.0 1317.3,766.3 1325.3,761.7 1333.3,753.5 1341.3,735.9 1349.3,717.2 1357.3,709.4 1365.3,700.3 1373.3,683.0 1381.3,668.0 1389.3,659.2 1397.3,655.2 1405.3,647.9 1413.3,633.7 1421.3,624.7 1429.3,605.3 1437.3,582.0 1445.3,573.0 1453.3,563.0 1461.3,553.2 1469.3,545.7 1477.3,542.5 1485.3,537.9 1493.3,532.4 1501.3,529.3 1509.3,528.5" />
<polyline fill="none" stroke="#1010c0" stroke-width="2.1" stroke-linejoin="round" points="13.3,419.5 21.3,421.8 29.3,421.4 37.3,414.2 45.3,420.6 53.3,436.8 61.3,470.4 69.3,489.7 77.3,509.3 85.3,539.7 93.3,548.3 101.3,532.7 109.3,522.8 117.3,545.4 125.3,545.7 133.3,561.9 141.3,571.9 149.3,568.0 157.3,591.0 165.3,589.5 173.3,593.7 181.3,596.9 189.3,562.9 197.3,547.0 205.3,542.0 213.3,514.0 221.3,506.5 229.3,522.7 237.3,511.9 245.3,501.9 253.3,511.0 261.3,506.5 269.3,499.7 277.3,500.9 285.3,462.4 293.3,447.2 301.3,442.6 309.3,439.3 317.3,442.7 325.3,461.3 333.3,463.7 341.3,454.8 349.3,460.4 357.3,444.2 365.3,433.6 373.3,431.3 381.3,431.7 389.3,412.3 397.3,433.2 405.3,441.1 413.3,436.0 421.3,421.0 429.3,405.0 437.3,408.0 445.3,434.5 453.3,445.8 461.3,447.9 469.3,444.9 477.3,434.0 485.3,425.5 493.3,392.7 501.3,406.4 509.3,403.7 517.3,390.8 525.3,390.9 533.3,379.0 541.3,389.0 549.3,386.0 557.3,398.0 565.3,398.5 573.3,398.7 581.3,400.4 589.3,388.7 597.3,377.8 605.3,378.9 613.3,387.5 621.3,388.7 629.3,390.4 637.3,386.7 645.3,382.8 653.3,365.9 661.3,354.5 669.3,357.2 677.3,347.1 685.3,356.6 693.3,356.3 701.3,349.1 709.3,337.6 717.3,329.3 725.3,318.6 733.3,288.8 741.3,280.4 749.3,271.2 757.3,254.6 765.3,232.3 773.3,210.7 781.3,210.3 789.3,213.7 797.3,196.8 805.3,183.4 813.3,160.7 821.3,165.4 829.3,187.7 837.3,194.3 845.3,184.2 853.3,208.1 861.3,239.0 869.3,280.0 877.3,314.0 885.3,353.0 893.3,353.0 901.3,344.5 909.3,332.8 917.3,320.4 925.3,355.2 933.3,396.6 941.3,494.8 949.3,573.4 957.3,651.7 965.3,695.8 973.3,692.9 981.3,686.0 989.3,672.0 997.3,644.5 1005.3,618.7 1013.3,607.9 1021.3,618.4 1029.3,644.7 1037.3,646.9 1045.3,662.9 1053.3,648.0 1061.3,658.0 1069.3,685.5 1077.3,681.7 1085.3,676.4 1093.3,701.7 1101.3,715.8 1109.3,713.4 1117.3,729.7 1125.3,731.4 1133.3,738.7 1141.3,738.8 1149.3,748.4 1157.3,743.7 1165.3,734.9 1173.3,728.4 1181.3,720.2 1189.3,720.1 1197.3,731.6 1205.3,745.8 1213.3,757.4 1221.3,774.2 1229.3,768.1 1237.3,774.5 1245.3,783.8 1253.3,786.9 1261.3,765.4 1269.3,745.7 1277.3,743.9 1285.3,766.4 1293.3,767.2 1301.3,772.6 1309.3,771.3 1317.3,766.2 1325.3,757.1 1333.3,743.0 1341.3,713.0 1349.3,687.0 1357.3,686.5 1365.3,679.8 1373.3,655.4 1381.3,639.2 1389.3,636.1 1397.3,639.5 1405.3,632.8 1413.3,611.9 1421.3,604.9 1429.3,576.0 1437.3,544.0 1445.3,545.0 1453.3,539.0 1461.3,531.5 1469.3,527.2 1477.3,530.1 1485.3,527.1 1493.3,521.5 1501.3,520.8 1509.3,523.4" />
<polyline fill="none" stroke="#7a4020" stroke-width="1" points="1437,509.5 1466,508.5 1478,506.5 1494,505.5 1501,505"/>
<line x1="1493.5" x2="1493.5" y1="505" y2="519" stroke="#5a4030" stroke-width="1"/>
<line x1="1445.5" y1="567" x2="1498" y2="532" stroke="#503028" stroke-width="1"/>
<path d="M1485,517 l5,-4 l5,4 M1490,514 l6,4" stroke="#40c040" fill="none" stroke-width="1"/>
<path d="M1497,536 l4,-6 l3,3 M1506,537.5 h5" stroke="#d05050" fill="none" stroke-width="1"/>
</g>
<g clip-path="url(#ca)">
<line x1="13" x2="1879" y1="943.5" y2="943.5" stroke="#c02020" stroke-width="1"/>
<polyline fill="none" stroke="#40b040" stroke-width="1" stroke-linejoin="round" points="13.3,943.4 21.3,948.9 29.3,953.8 37.3,942.2 45.3,947.9 53.3,952.9 61.3,957.2 69.3,960.9 77.3,964.1 85.3,966.9 93.3,969.3 101.3,950.2 109.3,940.7 117.3,946.6 125.3,951.7 133.3,956.2 141.3,960.0 149.3,951.7 157.3,956.1 165.3,960.0 173.3,963.3 181.3,966.2 189.3,942.4 197.3,930.8 205.3,938.1 213.3,922.9 221.3,923.4 229.3,931.6 237.3,938.7 245.3,936.4 253.3,942.9 261.3,948.5 269.3,947.8 277.3,952.8 285.3,934.9 293.3,938.5 301.3,944.7 309.3,950.1 317.3,945.2 325.3,950.5 333.3,955.1 341.3,947.9 349.3,952.8 357.3,941.9 365.3,935.6 373.3,942.2 381.3,937.2 389.3,943.6 397.3,949.1 405.3,953.9 413.3,948.3 421.3,945.0 429.3,930.4 437.3,937.7 445.3,944.0 453.3,949.4 461.3,954.2 469.3,955.8 477.3,946.6 485.3,930.9 493.3,923.5 501.3,928.5 509.3,936.0 517.3,921.9 525.3,926.8 533.3,934.6 541.3,939.5 549.3,945.6 557.3,950.9 565.3,955.4 573.3,937.5 581.3,943.8 589.3,932.5 597.3,935.5 605.3,930.7 613.3,938.0 621.3,944.2 629.3,949.7 637.3,945.9 645.3,933.7 653.3,927.8 661.3,927.0 669.3,922.9 677.3,931.2 685.3,932.2 693.3,939.2 701.3,926.6 709.3,927.2 717.3,929.1 725.3,925.5 733.3,913.5 741.3,923.1 749.3,927.2 757.3,917.3 765.3,903.2 773.3,898.0 781.3,909.6 789.3,919.7 797.3,908.1 805.3,906.0 813.3,900.1 821.3,904.7 829.3,915.4 837.3,924.7 845.3,918.3 853.3,927.2 861.3,934.9 869.3,941.6 877.3,947.4 885.3,952.4 893.3,954.6 901.3,958.6 909.3,948.5 917.3,946.5 925.3,951.6 933.3,956.1 941.3,959.9 949.3,963.3 957.3,966.2 965.3,968.7 973.3,966.7 981.3,962.9 989.3,951.3 997.3,947.3 1005.3,935.7 1013.3,942.3 1021.3,941.1 1029.3,946.9 1037.3,952.0 1045.3,956.4 1053.3,960.2 1061.3,963.5 1069.3,966.4 1077.3,968.9 1085.3,954.7 1093.3,958.7 1101.3,962.2 1109.3,960.5 1117.3,963.8 1125.3,966.6 1133.3,969.1 1141.3,966.4 1149.3,968.9 1157.3,971.0 1165.3,961.3 1173.3,964.4 1181.3,947.0 1189.3,952.1 1197.3,956.5 1205.3,960.3 1213.3,963.6 1221.3,966.4 1229.3,963.8 1237.3,966.6 1245.3,969.0 1253.3,971.2 1261.3,948.3 1269.3,934.7 1277.3,941.4 1285.3,947.2 1293.3,952.3 1301.3,950.9 1309.3,955.4 1317.3,936.5 1325.3,930.2 1333.3,925.9 1341.3,910.0 1349.3,895.6 1357.3,900.0 1365.3,911.3 1373.3,903.3 1381.3,899.9 1389.3,911.2 1397.3,921.0 1405.3,926.2 1413.3,915.6 1421.3,924.8 1429.3,911.9 1437.3,900.1 1445.3,909.2 1453.3,919.3 1461.3,920.9 1469.3,929.5 1477.3,935.6 1485.3,936.6 1493.3,943.1 1501.3,948.6 1509.3,953.5" />
<polyline fill="none" stroke="#d02020" stroke-width="1" stroke-linejoin="round" points="13.3,943.4 21.3,948.9 29.3,949.9 37.3,954.6 45.3,949.2 53.3,941.1 61.3,927.2 69.3,919.3 77.3,928.1 85.3,915.1 93.3,924.4 101.3,932.5 109.3,939.5 117.3,927.1 125.3,934.8 133.3,926.3 141.3,934.2 149.3,940.9 157.3,933.4 165.3,929.2 173.3,936.6 181.3,934.6 189.3,941.4 197.3,947.2 205.3,943.0 213.3,948.6 221.3,953.4 229.3,942.5 237.3,943.1 245.3,948.7 253.3,944.7 261.3,944.6 269.3,949.9 277.3,954.6 285.3,958.7 293.3,962.2 301.3,965.2 309.3,945.9 317.3,951.1 325.3,935.6 333.3,942.2 341.3,947.9 349.3,946.1 357.3,951.3 365.3,955.8 373.3,947.8 381.3,952.7 389.3,953.5 397.3,949.1 405.3,953.9 413.3,958.0 421.3,961.6 429.3,964.7 437.3,948.7 445.3,945.7 453.3,943.3 461.3,943.3 469.3,948.9 477.3,953.7 485.3,957.9 493.3,961.5 501.3,964.6 509.3,967.3 517.3,969.7 525.3,971.7 533.3,973.5 541.3,975.0 549.3,972.3 557.3,972.2 565.3,960.7 573.3,964.0 581.3,943.2 589.3,948.8 597.3,953.6 605.3,957.8 613.3,945.4 621.3,942.0 629.3,942.7 637.3,948.3 645.3,953.2 653.3,957.4 661.3,961.1 669.3,964.3 677.3,964.5 685.3,967.3 693.3,969.6 701.3,971.7 709.3,973.5 717.3,975.0 725.3,976.3 733.3,977.5 741.3,978.5 749.3,979.4 757.3,980.1 765.3,980.8 773.3,981.3 781.3,981.8 789.3,961.0 797.3,964.2 805.3,967.0 813.3,969.4 821.3,971.5 829.3,952.0 837.3,956.4 845.3,960.2 853.3,951.4 861.3,955.9 869.3,933.5 877.3,940.4 885.3,922.4 893.3,930.8 901.3,938.0 909.3,944.3 917.3,949.7 925.3,936.7 933.3,916.9 941.3,901.5 949.3,910.8 957.3,908.4 965.3,903.3 973.3,914.2 981.3,923.6 989.3,931.8 997.3,938.9 1005.3,945.1 1013.3,941.7 1021.3,947.5 1029.3,931.5 1037.3,938.6 1045.3,943.9 1053.3,949.4 1061.3,954.2 1069.3,933.1 1077.3,933.1 1085.3,940.0 1093.3,926.6 1101.3,934.4 1109.3,941.1 1117.3,939.9 1125.3,941.8 1133.3,943.0 1141.3,948.6 1149.3,942.0 1157.3,947.8 1165.3,952.7 1173.3,941.7 1181.3,947.5 1189.3,935.2 1197.3,931.8 1205.3,920.4 1213.3,923.2 1221.3,910.6 1229.3,920.5 1237.3,929.1 1245.3,932.2 1253.3,926.2 1261.3,934.0 1269.3,940.8 1277.3,946.7 1285.3,927.2 1293.3,929.1 1301.3,936.6 1309.3,943.0 1317.3,948.6 1325.3,953.5 1333.3,957.7 1341.3,961.3 1349.3,964.5 1357.3,967.2 1365.3,969.6 1373.3,971.6 1381.3,973.4 1389.3,961.1 1397.3,964.3 1405.3,967.1 1413.3,969.4 1421.3,971.5 1429.3,973.3 1437.3,974.9 1445.3,976.2 1453.3,966.9 1461.3,969.3 1469.3,971.4 1477.3,973.2 1485.3,974.8 1493.3,976.2 1501.3,961.3 1509.3,964.4" />
<polyline fill="none" stroke="#000000" stroke-width="1" stroke-linejoin="round" points="13.3,922.6 21.3,930.9 29.3,936.5 37.3,938.3 45.3,944.0 53.3,945.2 61.3,940.8 69.3,933.9 77.3,927.9 85.3,919.2 93.3,911.6 101.3,915.8 109.3,924.7 117.3,927.1 125.3,929.2 133.3,927.2 141.3,925.4 149.3,929.5 157.3,929.1 165.3,925.9 173.3,923.2 181.3,918.8 189.3,927.3 197.3,930.1 205.3,935.9 213.3,935.2 221.3,932.9 229.3,936.7 237.3,941.7 245.3,943.5 253.3,948.4 261.3,951.9 269.3,955.5 277.3,958.6 285.3,953.5 293.3,948.2 301.3,943.6 309.3,947.6 317.3,950.3 325.3,950.0 333.3,949.8 341.3,954.5 349.3,955.9 357.3,956.4 365.3,953.1 373.3,955.4 381.3,954.0 389.3,954.3 397.3,958.4 405.3,961.9 413.3,960.8 421.3,956.7 429.3,947.8 437.3,949.1 445.3,953.3 453.3,955.3 461.3,955.1 469.3,956.2 477.3,957.2 485.3,951.7 493.3,943.8 501.3,936.2 509.3,929.7 517.3,920.1 525.3,911.4 533.3,903.7 541.3,896.8 549.3,894.3 557.3,893.9 565.3,903.3 573.3,903.4 581.3,914.1 589.3,918.5 597.3,921.2 605.3,920.5 613.3,926.7 621.3,933.7 629.3,938.1 637.3,943.4 645.3,942.5 653.3,938.4 661.3,933.1 669.3,926.2 677.3,921.6 685.3,916.2 693.3,911.6 701.3,903.9 709.3,896.3 717.3,888.8 725.3,880.9 733.3,872.3 741.3,864.9 749.3,858.1 757.3,851.0 765.3,843.9 773.3,837.2 781.3,831.4 789.3,839.1 797.3,842.6 805.3,844.2 813.3,843.8 821.3,842.9 829.3,852.0 837.3,859.8 845.3,863.8 853.3,872.6 861.3,880.2 869.3,891.8 877.3,901.9 885.3,904.2 893.3,907.2 901.3,909.8 909.3,918.3 917.3,926.0 925.3,928.8 933.3,925.1 941.3,918.1 949.3,911.9 957.3,904.9 965.3,897.0 973.3,892.5 981.3,891.8 989.3,898.0 997.3,906.8 1005.3,914.4 1013.3,923.6 1021.3,929.6 1029.3,932.3 1037.3,934.6 1045.3,936.4 1053.3,937.9 1061.3,939.2 1069.3,932.2 1077.3,924.7 1085.3,927.3 1093.3,924.5 1101.3,922.0 1109.3,922.5 1117.3,920.9 1125.3,918.3 1133.3,914.7 1141.3,915.0 1149.3,911.8 1157.3,908.9 1165.3,914.8 1173.3,914.3 1181.3,923.6 1189.3,926.1 1197.3,925.6 1205.3,921.1 1213.3,916.2 1221.3,908.7 1229.3,904.9 1237.3,901.6 1245.3,897.9 1253.3,892.3 1261.3,900.1 1269.3,909.7 1277.3,917.9 1285.3,921.0 1293.3,922.3 1301.3,925.9 1309.3,929.0 1317.3,932.5 1325.3,932.0 1333.3,928.9 1341.3,921.9 1349.3,912.9 1357.3,904.4 1365.3,897.0 1373.3,888.8 1381.3,880.5 1389.3,880.3 1397.3,880.1 1405.3,879.3 1413.3,875.8 1421.3,872.8 1429.3,867.7 1437.3,861.5 1445.3,856.0 1453.3,857.4 1461.3,857.6 1469.3,857.8 1477.3,857.7 1485.3,856.6 1493.3,855.6 1501.3,867.1 1509.3,877.0" />
</g>
<line x1="1509" x2="1549" y1="306.5" y2="306.5" stroke="#5050a0" stroke-width="1"/>
<line x1="1509" x2="1549" y1="407.5" y2="407.5" stroke="#5050a0" stroke-width="1"/>
<line x1="1509" x2="1549" y1="449.5" y2="449.5" stroke="#5050a0" stroke-width="1"/>
<line x1="1509" x2="1549" y1="549.5" y2="549.5" stroke="#8a5a80" stroke-width="1"/>
<line x1="1509" x2="1549" y1="591.5" y2="591.5" stroke="#8a5a80" stroke-width="1"/>
<line x1="1509" x2="1549" y1="692.5" y2="692.5" stroke="#8a5a80" stroke-width="1"/>
<line x1="1509" x2="1549" y1="734.5" y2="734.5" stroke="#8a5a80" stroke-width="1"/>
<rect x="12.5" y="82.5" width="1867" height="743" fill="none" stroke="#000" stroke-width="1"/>
<rect x="12.5" y="827.5" width="1867" height="160" fill="none" stroke="#000" stroke-width="1"/>
<line x1="1880" x2="1884" y1="96.0" y2="96.0" stroke="#000" stroke-width="1"/>
<line x1="1880" x2="1884" y1="128.9" y2="128.9" stroke="#000" stroke-width="1"/>
<line x1="1880" x2="1884" y1="161.9" y2="161.9" stroke="#000" stroke-width="1"/>
<line x1="1880" x2="1884" y1="194.8" y2="194.8" stroke="#000" stroke-width="1"/>
<line x1="1880" x2="1884" y1="227.8" y2="227.8" stroke="#000" stroke-width="1"/>
<line x1="1880" x2="1884" y1="260.7" y2="260.7" stroke="#000" stroke-width="1"/>
<line x1="1880" x2="1884" y1="293.6" y2="293.6" stroke="#000" stroke-width="1"/>
<line x1="1880" x2="1884" y1="326.6" y2="326.6" stroke="#000" stroke-width="1"/>
<line x1="1880" x2="1884" y1="359.5" y2="359.5" stroke="#000" stroke-width="1"/>
<line x1="1880" x2="1884" y1="392.5" y2="392.5" stroke="#000" stroke-width="1"/>
<line x1="1880" x2="1884" y1="425.4" y2="425.4" stroke="#000" stroke-width="1"/>
<line x1="1880" x2="1884" y1="458.3" y2="458.3" stroke="#000" stroke-width="1"/>
<line x1="1880" x2="1884" y1="491.3" y2="491.3" stroke="#000" stroke-width="1"/>
<line x1="1880" x2="1884" y1="524.2" y2="524.2" stroke="#000" stroke-width="1"/>
<line x1="1880" x2="1884" y1="557.2" y2="557.2" stroke="#000" stroke-width="1"/>
<line x1="1880" x2="1884" y1="590.1" y2="590.1" stroke="#000" stroke-width="1"/>
<line x1="1880" x2="1884" y1="623.0" y2="623.0" stroke="#000" stroke-width="1"/>
<line x1="1880" x2="1884" y1="656.0" y2="656.0" stroke="#000" stroke-width="1"/>
<line x1="1880" x2="1884" y1="688.9" y2="688.9" stroke="#000" stroke-width="1"/>
<line x1="1880" x2="1884" y1="721.9" y2="721.9" stroke="#000" stroke-width="1"/>
<line x1="1880" x2="1884" y1="754.8" y2="754.8" stroke="#000" stroke-width="1"/>
<line x1="1880" x2="1884" y1="787.7" y2="787.7" stroke="#000" stroke-width="1"/>
<line x1="1880" x2="1884" y1="820.7" y2="820.7" stroke="#000" stroke-width="1"/>
<line x1="1880" x2="1884" y1="829.5" y2="829.5" stroke="#000" stroke-width="1"/>
<line x1="1880" x2="1884" y1="868.5" y2="868.5" stroke="#000" stroke-width="1"/>
<line x1="1880" x2="1884" y1="907.5" y2="907.5" stroke="#000" stroke-width="1"/>
<line x1="1880" x2="1884" y1="946.5" y2="946.5" stroke="#000" stroke-width="1"/>
<line x1="13.5" x2="13.5" y1="988" y2="993" stroke="#000" stroke-width="1"/>
<line x1="77.5" x2="77.5" y1="988" y2="993" stroke="#000" stroke-width="1"/>
<line x1="141.5" x2="141.5" y1="988" y2="993" stroke="#000" stroke-width="1"/>
<line x1="205.5" x2="205.5" y1="988" y2="993" stroke="#000" stroke-width="1"/>
<line x1="269.5" x2="269.5" y1="988" y2="993" stroke="#000" stroke-width="1"/>
<line x1="333.5" x2="333.5" y1="988" y2="993" stroke="#000" stroke-width="1"/>
<line x1="397.5" x2="397.5" y1="988" y2="993" stroke="#000" stroke-width="1"/>
<line x1="461.5" x2="461.5" y1="988" y2="993" stroke="#000" stroke-width="1"/>
<line x1="525.5" x2="525.5" y1="988" y2="993" stroke="#000" stroke-width="1"/>
<line x1="589.5" x2="589.5" y1="988" y2="993" stroke="#000" stroke-width="1"/>
<line x1="653.5" x2="653.5" y1="988" y2="993" stroke="#000" stroke-width="1"/>
<line x1="717.5" x2="717.5" y1="988" y2="993" stroke="#000" stroke-width="1"/>
<line x1="781.5" x2="781.5" y1="988" y2="993" stroke="#000" stroke-width="1"/>
<line x1="845.5" x2="845.5" y1="988" y2="993" stroke="#000" stroke-width="1"/>
<line x1="909.5" x2="909.5" y1="988" y2="993" stroke="#000" stroke-width="1"/>
<line x1="973.5" x2="973.5" y1="988" y2="993" stroke="#000" stroke-width="1"/>
<line x1="1037.5" x2="1037.5" y1="988" y2="993" stroke="#000" stroke-width="1"/>
<line x1="1101.5" x2="1101.5" y1="988" y2="993" stroke="#000" stroke-width="1"/>
<line x1="1165.5" x2="1165.5" y1="988" y2="993" stroke="#000" stroke-width="1"/>
<line x1="1229.5" x2="1229.5" y1="988" y2="993" stroke="#000" stroke-width="1"/>
<line x1="1293.5" x2="1293.5" y1="988" y2="993" stroke="#000" stroke-width="1"/>
<line x1="1357.5" x2="1357.5" y1="988" y2="993" stroke="#000" stroke-width="1"/>
<line x1="1421.5" x2="1421.5" y1="988" y2="993" stroke="#000" stroke-width="1"/>
<line x1="1485.5" x2="1485.5" y1="988" y2="993" stroke="#000" stroke-width="1"/></svg>
<svg class="a" style="left:15px;top:88px" width="10" height="8"><path d="M1,1.5 h7 l-3.5,4.5 z" fill="#000"/></svg>
<div class="a" style="left:24.6px;top:121px;width:16.5px;height:5px;background:#f06a50"></div>
<div class="a" style="left:44.4px;top:121px;width:16.5px;height:5px;background:#f06a50"></div>
<div class="a" style="left:64.4px;top:121px;width:16.5px;height:5px;background:#ee1414"></div>
<div class="a" style="left:84.6px;top:121px;width:16.5px;height:5px;background:#ee1414"></div>
<div class="a" style="left:104.6px;top:121px;width:16.5px;height:5px;background:#107a14"></div>
<div class="a" style="left:24.6px;top:129px;width:16.5px;height:5px;background:#28e028"></div>
<div class="a" style="left:44.4px;top:129px;width:16.5px;height:5px;background:#f0a018"></div>
<div class="a" style="left:64.4px;top:129px;width:16.5px;height:5px;background:#f0a018"></div>
<div class="a" style="left:84.6px;top:129px;width:16.5px;height:5px;background:#ee1414"></div>
<div class="a" style="left:104.6px;top:129px;width:16.5px;height:5px;background:#f0a018"></div>
<div class="a" style="left:24.6px;top:137px;width:16.5px;height:5px;background:#28e028"></div>
<div class="a" style="left:44.4px;top:137px;width:16.5px;height:5px;background:#ee1414"></div>
<div class="a" style="left:64.4px;top:137px;width:16.5px;height:5px;background:#ee1414"></div>
<div class="a" style="left:84.6px;top:137px;width:16.5px;height:5px;background:#ee1414"></div>
<div class="a" style="left:104.6px;top:137px;width:16.5px;height:5px;background:#28e028"></div>
<div class="a" style="left:9px;top:1007px;width:1911px;height:20px;background:#f0f0f0;border-top:1px solid #000"></div>
<div class="a" style="left:92px;top:1010px;width:1px;height:13px;background:#707070"></div>
<div class="a" style="left:172px;top:1010px;width:1px;height:13px;background:#707070"></div>
<div class="a" style="left:252px;top:1010px;width:1px;height:13px;background:#707070"></div>
<div class="a" style="left:328px;top:1010px;width:1px;height:13px;background:#707070"></div>
<div class="a" style="left:404px;top:1010px;width:1px;height:13px;background:#707070"></div>
<div class="a" style="left:484px;top:1010px;width:1px;height:13px;background:#707070"></div>
<div class="a" style="left:564px;top:1010px;width:1px;height:13px;background:#707070"></div>
<div class="a" style="left:656px;top:1010px;width:1px;height:13px;background:#707070"></div>
<div class="a" style="left:732px;top:1010px;width:1px;height:13px;background:#707070"></div>
<div class="a" style="left:808px;top:1010px;width:1px;height:13px;background:#707070"></div>
<div class="a" style="left:888px;top:1010px;width:1px;height:13px;background:#707070"></div>
<div class="a" style="left:968px;top:1010px;width:1px;height:13px;background:#707070"></div>
<div class="a" style="left:1048px;top:1010px;width:1px;height:13px;background:#707070"></div>
<div class="a" style="left:1136px;top:1010px;width:1px;height:13px;background:#707070"></div>
<div class="a" style="left:1212px;top:1010px;width:1px;height:13px;background:#707070"></div>
<div class="a" style="left:1288px;top:1010px;width:1px;height:13px;background:#707070"></div>
<div class="a" style="left:1544px;top:1010px;width:1px;height:13px;background:#707070"></div>
<div class="a" style="left:1624px;top:1010px;width:1px;height:13px;background:#707070"></div>
<div class="a" style="left:1704px;top:1010px;width:1px;height:13px;background:#707070"></div>
<div class="a" style="left:1784px;top:1010px;width:1px;height:13px;background:#707070"></div>
<div class="a" style="left:1864px;top:1010px;width:1px;height:13px;background:#707070"></div>
<div class="a" style="left:1364px;top:1007px;width:100px;height:19px;background:#fff;border:1px solid #000;border-top:none"></div>
<svg class="a" style="left:1893px;top:1010px" width="27" height="14"><path d="M8,7 l4,-3 v6 z" fill="#a0a0a0"/><path d="M20,3 l5,4 l-5,4 z" fill="#000"/></svg>
<div class="a" style="left:9px;top:1027px;width:1911px;height:33px;background:#f0f0f0;border-top:1px solid #fff"></div>
<div class="a" style="left:1198px;top:1029px;width:1px;height:18px;background:#b0b0b0"></div>
<div class="a" style="left:1314px;top:1029px;width:1px;height:18px;background:#b0b0b0"></div>
<div class="a" style="left:1416px;top:1029px;width:1px;height:18px;background:#b0b0b0"></div>
<div class="a" style="left:1487px;top:1029px;width:1px;height:18px;background:#b0b0b0"></div>
<div class="a" style="left:1556px;top:1029px;width:1px;height:18px;background:#b0b0b0"></div>
<div class="a" style="left:1626px;top:1029px;width:1px;height:18px;background:#b0b0b0"></div>
<div class="a" style="left:1696px;top:1029px;width:1px;height:18px;background:#b0b0b0"></div>
<div class="a" style="left:1762px;top:1029px;width:1px;height:18px;background:#b0b0b0"></div>
<svg class="a" style="left:0;top:1030px;overflow:visible" width="1" height="1"><g transform="translate(0,-1030)"><rect x="1768" y="1040" width="2" height="6" fill="#30a030"/><rect x="1771" y="1039" width="2" height="7" fill="#30a030"/><rect x="1774" y="1038" width="2" height="8" fill="#30a030"/><rect x="1777" y="1037" width="2" height="9" fill="#30a030"/><rect x="1780" y="1036" width="2" height="10" fill="#30a030"/><rect x="1783" y="1035" width="2" height="11" fill="#c03020"/><rect x="1786" y="1034" width="2" height="12" fill="#c03020"/><rect x="1789" y="1033" width="2" height="13" fill="#c03020"/></g></svg>
<div class="a t" style="left:819.10px;top:7.46px;font-size:16.0px;line-height:16.0px;color:#4a2838;transform:scaleX(0.9006)">2056574: Go Trader MT4 - [GBPJPY,Monthly]</div>
<div class="a t" style="left:35.21px;top:34.62px;font-size:12.5px;line-height:12.5px;color:#000;transform:scaleX(0.7895)">File</div>
<div class="a t" style="left:69.60px;top:34.62px;font-size:12.5px;line-height:12.5px;color:#000;transform:scaleX(0.8296)">View</div>
<div class="a t" style="left:110.17px;top:34.62px;font-size:12.5px;line-height:12.5px;color:#000;transform:scaleX(0.8333)">Insert</div>
<div class="a t" style="left:154.17px;top:34.62px;font-size:12.5px;line-height:12.5px;color:#000;transform:scaleX(0.8286)">Charts</div>
<div class="a t" style="left:203.00px;top:34.62px;font-size:12.5px;line-height:12.5px;color:#000;transform:scaleX(0.8621)">Tools</div>
<div class="a t" style="left:246.50px;top:34.62px;font-size:12.5px;line-height:12.5px;color:#000;transform:scaleX(0.8556)">Window</div>
<div class="a t" style="left:303.12px;top:34.62px;font-size:12.5px;line-height:12.5px;color:#000;transform:scaleX(0.8750)">Help</div>
<div class="a t" style="left:267.05px;top:59.52px;font-size:12.5px;line-height:12.5px;color:#000;transform:scaleX(0.9492)">New Order</div>
<div class="a t" style="left:384.00px;top:59.52px;font-size:12.5px;line-height:12.5px;color:#000;transform:scaleX(0.9478)">AutoTrading</div>
<div class="a t" style="left:1194.02px;top:60.68px;font-size:11.5px;line-height:11.5px;color:#4a4a4a;transform:scaleX(0.9786)">M1</div>
<div class="a t" style="left:1222.88px;top:60.68px;font-size:11.5px;line-height:11.5px;color:#4a4a4a;transform:scaleX(0.8200)">M5</div>
<div class="a t" style="left:1248.67px;top:60.68px;font-size:11.5px;line-height:11.5px;color:#4a4a4a;transform:scaleX(0.8333)">M15</div>
<div class="a t" style="left:1276.64px;top:60.68px;font-size:11.5px;line-height:11.5px;color:#4a4a4a;transform:scaleX(0.8571)">M30</div>
<div class="a t" style="left:1307.02px;top:60.68px;font-size:11.5px;line-height:11.5px;color:#4a4a4a;transform:scaleX(0.9769)">H1</div>
<div class="a t" style="left:1334.82px;top:60.68px;font-size:11.5px;line-height:11.5px;color:#4a4a4a;transform:scaleX(0.8786)">H4</div>
<div class="a t" style="left:1362.68px;top:60.68px;font-size:11.5px;line-height:11.5px;color:#4a4a4a;transform:scaleX(1.0231)">D1</div>
<div class="a t" style="left:1392.00px;top:60.68px;font-size:11.5px;line-height:11.5px;color:#4a4a4a;transform:scaleX(0.8235)">W1</div>
<div class="a t" style="left:1417.06px;top:60.68px;font-size:11.5px;line-height:11.5px;color:#4a4a4a;transform:scaleX(0.9375)">MN</div>
<div class="a t" style="left:28.00px;top:85.82px;font-size:10.0px;line-height:10.0px;color:#000;transform:scaleX(0.9395)">GBPJPY,Monthly</div>
<div class="a t" style="left:105.58px;top:85.82px;font-size:10.0px;line-height:10.0px;color:#000;transform:scaleX(0.9243)">172.829 173.949 170.939 171.533</div>
<div class="a t" style="left:22.19px;top:107.86px;font-size:11.0px;line-height:11.0px;color:#2a2ad8;font-weight:bold;transform:scaleX(0.8125)">MN</div>
<div class="a t" style="left:43.00px;top:107.86px;font-size:11.0px;line-height:11.0px;color:#2a2ad8;font-weight:bold;transform:scaleX(0.7941)">W1</div>
<div class="a t" style="left:62.65px;top:107.86px;font-size:11.0px;line-height:11.0px;color:#2a2ad8;font-weight:bold;transform:scaleX(0.8538)">D1</div>
<div class="a t" style="left:82.08px;top:107.86px;font-size:11.0px;line-height:11.0px;color:#2a2ad8;font-weight:bold;transform:scaleX(0.9231)">H4</div>
<div class="a t" style="left:102.08px;top:107.86px;font-size:11.0px;line-height:11.0px;color:#2a2ad8;font-weight:bold;transform:scaleX(0.9231)">H1</div>
<div class="a t" style="left:122.72px;top:105.66px;font-size:13.5px;line-height:13.5px;color:#1e1e9e;transform:scaleX(0.7791)">Signals</div>
<div class="a t" style="left:123.50px;top:118.65px;font-size:8.5px;line-height:8.5px;color:#1e1ea8;font-weight:bold;transform:scaleX(1.0200)">MACD</div>
<div class="a t" style="left:123.50px;top:127.15px;font-size:8.5px;line-height:8.5px;color:#1e1ea8;font-weight:bold;transform:scaleX(0.9118)">STR</div>
<div class="a t" style="left:123.50px;top:135.15px;font-size:8.5px;line-height:8.5px;color:#1e1ea8;font-weight:bold;transform:scaleX(0.9737)">EMA</div>
<div class="a t" style="left:23.03px;top:144.35px;font-size:20.5px;line-height:20.5px;color:#f0b440;transform:scaleX(0.9722)">171.533</div>
<div class="a t" style="left:23.00px;top:164.78px;font-size:11.5px;line-height:11.5px;color:#e8901c;font-weight:bold">10</div>
<div class="a t" style="left:51.89px;top:164.78px;font-size:11.5px;line-height:11.5px;color:#1c1cc0;transform:scaleX(1.1111)">Spread</div>
<div class="a t" style="left:23.50px;top:179.78px;font-size:11.5px;line-height:11.5px;color:#e0603a;font-weight:bold;transform:scaleX(0.9706)">-35</div>
<div class="a t" style="left:51.92px;top:179.78px;font-size:11.5px;line-height:11.5px;color:#1c1cc0;transform:scaleX(1.0769)">Pips to Open</div>
<div class="a t" style="left:22.94px;top:194.78px;font-size:11.5px;line-height:11.5px;color:#2ac82a;font-weight:bold;transform:scaleX(1.0556)">131</div>
<div class="a t" style="left:53.00px;top:194.78px;font-size:11.5px;line-height:11.5px;color:#1c1cc0;transform:scaleX(1.0800)">Today's Range</div>
<div class="a t" style="left:22.94px;top:209.78px;font-size:11.5px;line-height:11.5px;color:#2ac82a;font-weight:bold;transform:scaleX(1.0556)">101</div>
<div class="a t" style="left:62.45px;top:209.78px;font-size:11.5px;line-height:11.5px;color:#1c1cc0;transform:scaleX(1.0506)">Prev Days Range</div>
<div class="a t" style="left:24.00px;top:224.78px;font-size:11.5px;line-height:11.5px;color:#5ad05a;font-weight:bold">89</div>
<div class="a t" style="left:62.47px;top:224.78px;font-size:11.5px;line-height:11.5px;color:#1c1cc0;transform:scaleX(1.0325)">Prev 5 Days Av</div>
<div class="a t" style="left:24.00px;top:239.78px;font-size:11.5px;line-height:11.5px;color:#5ad05a;font-weight:bold">73</div>
<div class="a t" style="left:62.48px;top:239.78px;font-size:11.5px;line-height:11.5px;color:#1c1cc0;transform:scaleX(1.0192)">Prev 10 Day Av</div>
<div class="a t" style="left:24.00px;top:254.78px;font-size:11.5px;line-height:11.5px;color:#5ad05a;font-weight:bold">82</div>
<div class="a t" style="left:62.48px;top:254.78px;font-size:11.5px;line-height:11.5px;color:#1c1cc0;transform:scaleX(1.0192)">Prev 30 Day Av</div>
<div class="a t" style="left:18.30px;top:807.74px;font-size:10.5px;line-height:10.5px;color:#a6a6a6">Weekly Pivots | © CompassFX</div>
<div class="a t" style="left:17.50px;top:831.99px;font-size:9.5px;line-height:9.5px;color:#000;transform:scaleX(1.0056)">ADX(14) 50.0075 +DI:19.4489 -DI:11.1052</div>
<div class="a t" style="left:1885.00px;top:90.49px;font-size:9.5px;line-height:9.5px;color:#000;transform:scaleX(0.9559)">255.400</div>
<div class="a t" style="left:1885.00px;top:123.43px;font-size:9.5px;line-height:9.5px;color:#000;transform:scaleX(0.9559)">248.940</div>
<div class="a t" style="left:1885.00px;top:156.37px;font-size:9.5px;line-height:9.5px;color:#000;transform:scaleX(0.9559)">242.480</div>
<div class="a t" style="left:1885.00px;top:189.31px;font-size:9.5px;line-height:9.5px;color:#000;transform:scaleX(0.9559)">236.020</div>
<div class="a t" style="left:1885.00px;top:222.25px;font-size:9.5px;line-height:9.5px;color:#000;transform:scaleX(0.9559)">229.750</div>
<div class="a t" style="left:1885.00px;top:255.19px;font-size:9.5px;line-height:9.5px;color:#000;transform:scaleX(0.9559)">223.290</div>
<div class="a t" style="left:1885.00px;top:288.13px;font-size:9.5px;line-height:9.5px;color:#000;transform:scaleX(0.9559)">216.830</div>
<div class="a t" style="left:1885.00px;top:321.07px;font-size:9.5px;line-height:9.5px;color:#000;transform:scaleX(0.9559)">210.370</div>
<div class="a t" style="left:1885.00px;top:354.01px;font-size:9.5px;line-height:9.5px;color:#000;transform:scaleX(0.9559)">203.910</div>
<div class="a t" style="left:1884.02px;top:386.95px;font-size:9.5px;line-height:9.5px;color:#000;transform:scaleX(0.9848)">197.450</div>
<div class="a t" style="left:1884.02px;top:419.89px;font-size:9.5px;line-height:9.5px;color:#000;transform:scaleX(0.9848)">191.180</div>
<div class="a t" style="left:1884.02px;top:452.83px;font-size:9.5px;line-height:9.5px;color:#000;transform:scaleX(0.9848)">184.720</div>
<div class="a t" style="left:1884.02px;top:485.77px;font-size:9.5px;line-height:9.5px;color:#000;transform:scaleX(0.9848)">178.260</div>
<div class="a t" style="left:1884.02px;top:518.71px;font-size:9.5px;line-height:9.5px;color:#000;transform:scaleX(0.9848)">171.800</div>
<div class="a t" style="left:1884.02px;top:551.65px;font-size:9.5px;line-height:9.5px;color:#000;transform:scaleX(0.9848)">165.340</div>
<div class="a t" style="left:1884.02px;top:584.59px;font-size:9.5px;line-height:9.5px;color:#000;transform:scaleX(0.9848)">158.880</div>
<div class="a t" style="left:1884.02px;top:617.53px;font-size:9.5px;line-height:9.5px;color:#000;transform:scaleX(0.9848)">152.610</div>
<div class="a t" style="left:1884.02px;top:650.47px;font-size:9.5px;line-height:9.5px;color:#000;transform:scaleX(0.9848)">146.150</div>
<div class="a t" style="left:1884.02px;top:683.41px;font-size:9.5px;line-height:9.5px;color:#000;transform:scaleX(0.9848)">139.690</div>
<div class="a t" style="left:1884.02px;top:716.35px;font-size:9.5px;line-height:9.5px;color:#000;transform:scaleX(0.9848)">133.230</div>
<div class="a t" style="left:1884.02px;top:749.29px;font-size:9.5px;line-height:9.5px;color:#000;transform:scaleX(0.9848)">126.770</div>
<div class="a t" style="left:1884.02px;top:782.23px;font-size:9.5px;line-height:9.5px;color:#000;transform:scaleX(0.9848)">120.310</div>
<div class="a t" style="left:1883.98px;top:815.17px;font-size:9.5px;line-height:9.5px;color:#000;transform:scaleX(1.0156)">114.040</div>
<div class="a t" style="left:1882.44px;top:830.29px;font-size:9.5px;line-height:9.5px;color:#000;transform:scaleX(1.0556)">75</div>
<div class="a t" style="left:1882.44px;top:872.19px;font-size:9.5px;line-height:9.5px;color:#000;transform:scaleX(1.0556)">56</div>
<div class="a t" style="left:1883.50px;top:911.09px;font-size:9.5px;line-height:9.5px;color:#000;transform:scaleX(0.9500)">37</div>
<div class="a t" style="left:1882.44px;top:950.89px;font-size:9.5px;line-height:9.5px;color:#000;transform:scaleX(1.0556)">18</div>
<div class="a t" style="left:1883.50px;top:976.19px;font-size:9.5px;line-height:9.5px;color:#000;transform:scaleX(1.1000)">0</div>
<div class="a t" style="left:11.82px;top:991.79px;font-size:9.5px;line-height:9.5px;color:#000;transform:scaleX(0.9787)">1 Feb 1999</div>
<div class="a t" style="left:75.82px;top:991.79px;font-size:9.5px;line-height:9.5px;color:#000;transform:scaleX(0.9787)">1 Oct 1999</div>
<div class="a t" style="left:139.82px;top:991.79px;font-size:9.5px;line-height:9.5px;color:#000;transform:scaleX(0.9787)">1 Jun 2000</div>
<div class="a t" style="left:203.82px;top:991.79px;font-size:9.5px;line-height:9.5px;color:#000;transform:scaleX(0.9787)">1 Feb 2001</div>
<div class="a t" style="left:267.82px;top:991.79px;font-size:9.5px;line-height:9.5px;color:#000;transform:scaleX(0.9787)">1 Oct 2001</div>
<div class="a t" style="left:331.82px;top:991.79px;font-size:9.5px;line-height:9.5px;color:#000;transform:scaleX(0.9787)">1 Jun 2002</div>
<div class="a t" style="left:395.82px;top:991.79px;font-size:9.5px;line-height:9.5px;color:#000;transform:scaleX(0.9787)">1 Feb 2003</div>
<div class="a t" style="left:459.82px;top:991.79px;font-size:9.5px;line-height:9.5px;color:#000;transform:scaleX(0.9787)">1 Oct 2003</div>
<div class="a t" style="left:523.82px;top:991.79px;font-size:9.5px;line-height:9.5px;color:#000;transform:scaleX(0.9787)">1 Jun 2004</div>
<div class="a t" style="left:587.82px;top:991.79px;font-size:9.5px;line-height:9.5px;color:#000;transform:scaleX(0.9787)">1 Feb 2005</div>
<div class="a t" style="left:651.82px;top:991.79px;font-size:9.5px;line-height:9.5px;color:#000;transform:scaleX(0.9787)">1 Oct 2005</div>
<div class="a t" style="left:715.82px;top:991.79px;font-size:9.5px;line-height:9.5px;color:#000;transform:scaleX(0.9787)">1 Jun 2006</div>
<div class="a t" style="left:779.82px;top:991.79px;font-size:9.5px;line-height:9.5px;color:#000;transform:scaleX(0.9787)">1 Feb 2007</div>
<div class="a t" style="left:843.82px;top:991.79px;font-size:9.5px;line-height:9.5px;color:#000;transform:scaleX(0.9787)">1 Oct 2007</div>
<div class="a t" style="left:907.82px;top:991.79px;font-size:9.5px;line-height:9.5px;color:#000;transform:scaleX(0.9787)">1 Jun 2008</div>
<div class="a t" style="left:971.82px;top:991.79px;font-size:9.5px;line-height:9.5px;color:#000;transform:scaleX(0.9787)">1 Feb 2009</div>
<div class="a t" style="left:1035.82px;top:991.79px;font-size:9.5px;line-height:9.5px;color:#000;transform:scaleX(0.9787)">1 Oct 2009</div>
<div class="a t" style="left:1099.82px;top:991.79px;font-size:9.5px;line-height:9.5px;color:#000;transform:scaleX(0.9787)">1 Jun 2010</div>
<div class="a t" style="left:1163.80px;top:991.79px;font-size:9.5px;line-height:9.5px;color:#000">1 Feb 2011</div>
<div class="a t" style="left:1227.82px;top:991.79px;font-size:9.5px;line-height:9.5px;color:#000;transform:scaleX(0.9787)">1 Oct 2011</div>
<div class="a t" style="left:1291.82px;top:991.79px;font-size:9.5px;line-height:9.5px;color:#000;transform:scaleX(0.9787)">1 Jun 2012</div>
<div class="a t" style="left:1355.82px;top:991.79px;font-size:9.5px;line-height:9.5px;color:#000;transform:scaleX(0.9787)">1 Feb 2013</div>
<div class="a t" style="left:1419.82px;top:991.79px;font-size:9.5px;line-height:9.5px;color:#000;transform:scaleX(0.9787)">1 Oct 2013</div>
<div class="a t" style="left:1483.82px;top:991.79px;font-size:9.5px;line-height:9.5px;color:#000;transform:scaleX(0.9787)">1 Jun 2014</div>
<div class="a t" style="left:1816.02px;top:107.79px;font-size:9.5px;line-height:9.5px;color:#000;transform:scaleX(0.9839)">100.0&nbsp;&nbsp;251.090</div>
<div class="a t" style="left:1820.00px;top:255.19px;font-size:9.5px;line-height:9.5px;color:#000">78.6&nbsp;&nbsp;222.352</div>
<div class="a t" style="left:1821.00px;top:371.79px;font-size:9.5px;line-height:9.5px;color:#000;transform:scaleX(0.9828)">61.8&nbsp;&nbsp;199.791</div>
<div class="a t" style="left:1820.00px;top:452.89px;font-size:9.5px;line-height:9.5px;color:#000">50.0&nbsp;&nbsp;183.945</div>
<div class="a t" style="left:1821.00px;top:532.89px;font-size:9.5px;line-height:9.5px;color:#000;transform:scaleX(0.9828)">38.2&nbsp;&nbsp;168.098</div>
<div class="a t" style="left:1821.00px;top:633.99px;font-size:9.5px;line-height:9.5px;color:#000;transform:scaleX(0.9828)">23.6&nbsp;&nbsp;148.492</div>
<div class="a t" style="left:1829.00px;top:797.29px;font-size:9.5px;line-height:9.5px;color:#000">0.0 116.799</div>
<div class="a t" style="left:1537.00px;top:309.42px;font-size:10.0px;line-height:10.0px;color:#8c8c8c;transform:scaleX(1.0870)">wR 3</div>
<div class="a t" style="left:1537.00px;top:410.42px;font-size:10.0px;line-height:10.0px;color:#8c8c8c;transform:scaleX(1.1364)">wR 2</div>
<div class="a t" style="left:1537.00px;top:452.42px;font-size:10.0px;line-height:10.0px;color:#8c8c8c;transform:scaleX(1.1364)">wR 1</div>
<div class="a t" style="left:1537.00px;top:593.91px;font-size:10.0px;line-height:10.0px;color:#8c8c8c;transform:scaleX(1.1364)">wS 1</div>
<div class="a t" style="left:1537.00px;top:694.91px;font-size:10.0px;line-height:10.0px;color:#8c8c8c;transform:scaleX(1.1364)">wS 2</div>
<div class="a t" style="left:1537.00px;top:736.91px;font-size:10.0px;line-height:10.0px;color:#8c8c8c;transform:scaleX(1.1364)">wS 3</div>
<div class="a t" style="left:1827.97px;top:493.15px;font-size:20.5px;line-height:20.5px;color:#e020e0;transform:scaleX(1.0312)">173</div>
<div class="a t" style="left:1518.45px;top:528.18px;font-size:16.5px;line-height:16.5px;color:#e03434;transform:scaleX(1.2466)">36000:5</div>
<div class="a t" style="left:1519.70px;top:550.38px;font-size:11.5px;line-height:11.5px;color:#b48ad8;transform:scaleX(0.9136)">Weekly Pivot</div>
<div class="a t" style="left:21.79px;top:1012.62px;font-size:10.0px;line-height:10.0px;color:#7c7c7c;transform:scaleX(1.0088)">EURUSD,H4</div>
<div class="a t" style="left:101.79px;top:1012.62px;font-size:10.0px;line-height:10.0px;color:#7c7c7c;transform:scaleX(1.0088)">EURUSD,H4</div>
<div class="a t" style="left:181.79px;top:1012.62px;font-size:10.0px;line-height:10.0px;color:#7c7c7c;transform:scaleX(1.0088)">EURUSD,H4</div>
<div class="a t" style="left:261.72px;top:1012.62px;font-size:10.0px;line-height:10.0px;color:#7c7c7c;transform:scaleX(1.0849)">EURJPY,H4</div>
<div class="a t" style="left:337.72px;top:1012.62px;font-size:10.0px;line-height:10.0px;color:#7c7c7c;transform:scaleX(1.0849)">EURJPY,H4</div>
<div class="a t" style="left:414.80px;top:1012.62px;font-size:10.0px;line-height:10.0px;color:#7c7c7c;transform:scaleX(0.9914)">AUDUSD,H4</div>
<div class="a t" style="left:495.80px;top:1012.62px;font-size:10.0px;line-height:10.0px;color:#7c7c7c;transform:scaleX(0.9914)">AUDUSD,H4</div>
<div class="a t" style="left:576.80px;top:1012.62px;font-size:10.0px;line-height:10.0px;color:#7c7c7c;transform:scaleX(1.0132)">AUDUSD,Daily</div>
<div class="a t" style="left:666.80px;top:1012.62px;font-size:10.0px;line-height:10.0px;color:#7c7c7c;transform:scaleX(1.0648)">AUDJPY,H4</div>
<div class="a t" style="left:742.80px;top:1012.62px;font-size:10.0px;line-height:10.0px;color:#7c7c7c;transform:scaleX(1.0648)">AUDJPY,H4</div>
<div class="a t" style="left:819.80px;top:1012.62px;font-size:10.0px;line-height:10.0px;color:#7c7c7c;transform:scaleX(0.9914)">GBPUSD,H4</div>
<div class="a t" style="left:899.80px;top:1012.62px;font-size:10.0px;line-height:10.0px;color:#7c7c7c;transform:scaleX(0.9914)">GBPUSD,H4</div>
<div class="a t" style="left:977.77px;top:1012.62px;font-size:10.0px;line-height:10.0px;color:#7c7c7c;transform:scaleX(1.0268)">NZDUSD,H4</div>
<div class="a t" style="left:1056.79px;top:1012.62px;font-size:10.0px;line-height:10.0px;color:#7c7c7c;transform:scaleX(1.0132)">NZDUSD,Daily</div>
<div class="a t" style="left:1145.72px;top:1012.62px;font-size:10.0px;line-height:10.0px;color:#7c7c7c;transform:scaleX(1.0849)">USDJPY,H4</div>
<div class="a t" style="left:1221.72px;top:1012.62px;font-size:10.0px;line-height:10.0px;color:#7c7c7c;transform:scaleX(1.0849)">USDJPY,H4</div>
<div class="a t" style="left:1298.80px;top:1012.62px;font-size:10.0px;line-height:10.0px;color:#7c7c7c;transform:scaleX(1.0648)">GBPJPY,H4</div>
<div class="a t" style="left:1473.79px;top:1012.62px;font-size:10.0px;line-height:10.0px;color:#7c7c7c;transform:scaleX(1.0088)">EURAUD,H4</div>
<div class="a t" style="left:1553.79px;top:1012.62px;font-size:10.0px;line-height:10.0px;color:#7c7c7c;transform:scaleX(1.0088)">EURAUD,H4</div>
<div class="a t" style="left:1634.80px;top:1012.62px;font-size:10.0px;line-height:10.0px;color:#7c7c7c;transform:scaleX(1.0088)">AUDNZD,H4</div>
<div class="a t" style="left:1714.80px;top:1012.62px;font-size:10.0px;line-height:10.0px;color:#7c7c7c;transform:scaleX(1.0088)">AUDNZD,H4</div>
<div class="a t" style="left:1794.80px;top:1012.62px;font-size:10.0px;line-height:10.0px;color:#7c7c7c;transform:scaleX(1.0088)">GBPAUD,H4</div>
<div class="a t" style="left:1873.80px;top:1012.62px;font-size:10.0px;line-height:10.0px;color:#7c7c7c;transform:scaleX(1.0132)">GBI</div>
<div class="a t" style="left:1374.00px;top:1012.62px;font-size:10.0px;line-height:10.0px;color:#000;transform:scaleX(1.0132)">GBPJPY,Monthly</div>
<div class="a t" style="left:9.39px;top:1034.91px;font-size:10.0px;line-height:10.0px;color:#000;transform:scaleX(1.1111)">For Help, press F1</div>
<div class="a t" style="left:1203.30px;top:1034.82px;font-size:10.0px;line-height:10.0px;color:#000;transform:scaleX(1.1968)">Default</div>
<div class="a t" style="left:1319.52px;top:1034.82px;font-size:10.0px;line-height:10.0px;color:#000;transform:scaleX(1.0831)">1999.05.01 00:00</div>
<div class="a t" style="left:1422.00px;top:1034.82px;font-size:10.0px;line-height:10.0px;color:#000;transform:scaleX(1.1020)">O: 192.340</div>
<div class="a t" style="left:1492.42px;top:1034.82px;font-size:10.0px;line-height:10.0px;color:#000;transform:scaleX(1.0833)">H: 201.980</div>
<div class="a t" style="left:1562.91px;top:1034.82px;font-size:10.0px;line-height:10.0px;color:#000;transform:scaleX(1.0870)">L: 191.300</div>
<div class="a t" style="left:1632.50px;top:1034.82px;font-size:10.0px;line-height:10.0px;color:#000;transform:scaleX(1.0510)">C: 194.780</div>
<div class="a t" style="left:1702.50px;top:1034.82px;font-size:10.0px;line-height:10.0px;color:#000;transform:scaleX(1.0735)">V: 6905</div>
<div class="a t" style="left:1827.50px;top:1034.82px;font-size:10.0px;line-height:10.0px;color:#000;transform:scaleX(1.1447)">338/3 kb</div>
<div class="a" style="left:1880px;top:513px;width:40px;height:4px;background:#a83030"></div>
<div class="a" style="left:1880px;top:526px;width:40px;height:5px;background:#000"></div>
<div class="a" style="left:1880px;top:515.7px;width:40px;height:11px;background:#1414e0"></div>
<div class="a" style="left:1880px;top:532.8px;width:40px;height:11px;background:#14e014"></div>
<div class="a" style="left:1880px;top:546.0px;width:40px;height:11px;background:#1414e0"></div>
<div class="a" style="left:1880px;top:614.4px;width:40px;height:11px;background:#14e014"></div>
<div class="a" style="left:1880px;top:937.9px;width:40px;height:11px;background:#b42020"></div>
<div class="a t" style="left:1884.02px;top:516.49px;font-size:9.5px;line-height:9.5px;color:#ffffff;transform:scaleX(0.9848)">172.376</div>
<div class="a t" style="left:1884.02px;top:533.59px;font-size:9.5px;line-height:9.5px;color:#ffffff;transform:scaleX(0.9848)">169.171</div>
<div class="a t" style="left:1884.02px;top:546.79px;font-size:9.5px;line-height:9.5px;color:#ffffff;transform:scaleX(0.9848)">166.459</div>
<div class="a t" style="left:1884.02px;top:615.19px;font-size:9.5px;line-height:9.5px;color:#ffffff;transform:scaleX(0.9848)">153.283</div>
<div class="a t" style="left:1886.00px;top:938.69px;font-size:9.5px;line-height:9.5px;color:#ffffff">20.000</div>
<div class="a" style="left:0;top:1040px;width:1920px;height:8px;background:rgba(120,40,75,0.38)"></div>
<div class="a" style="left:0;top:1048px;width:1920px;height:7px;background:#9e5e7a"></div>
<div class="a" style="left:0;top:1055px;width:1920px;height:25px;background:#4c2b3b"></div>
<div class="a" style="left:176px;top:1041px;width:58px;height:38px;background:rgba(255,255,255,0.2);border:1px solid rgba(255,255,255,0.35)"></div>
<div class="a" style="left:362px;top:1041px;width:58px;height:38px;background:rgba(255,255,255,0.32);border:1px solid rgba(255,255,255,0.75)"></div>
<div class="a" style="left:424px;top:1041px;width:58px;height:38px;background:rgba(255,255,255,0.2);border:1px solid rgba(255,255,255,0.35)"></div>
<div class="a" style="left:486px;top:1041px;width:58px;height:38px;background:rgba(255,255,255,0.2);border:1px solid rgba(255,255,255,0.35)"></div>
<svg class="a" style="left:0;top:0" width="1920" height="1080"><path d="M12,1049 l11,-1.6 v11.6 h-11 z M24,1047.3 l14,-2 v13.7 h-14 z M12,1060 h11 v11.6 l-11,-1.6 z M24,1060 h14 v13.7 l-14,-2 z" fill="#fff"/><circle cx="81" cy="1060" r="12" fill="#30a8e8"/><circle cx="81" cy="1060" r="6" fill="#4c2b3b"/><rect x="71" y="1059" width="20" height="3" fill="#30a8e8"/><rect x="81" y="1061" width="12" height="6" fill="#4c2b3b"/><path d="M67,1072 q4,-24 28,-28 q-18,10 -24,28 z" fill="#f0c020"/><path d="M128,1046 h10 l2,3 h19 v21 h-31 z" fill="#f8e8a0" stroke="#c8a040"/><rect x="130" y="1051" width="27" height="3" fill="#e0c060"/><rect x="133" y="1062" width="21" height="9" fill="#58a8e0"/><rect x="139" y="1065" width="9" height="4" fill="#f0c040"/><circle cx="205" cy="1060" r="14" fill="#e8c030"/><path d="M205,1046 a14,14 0 0 1 12.1,7 h-12.1 a7,7 0 0 0 -6,3.5 l-6.1,-10.5 a14,14 0 0 1 12.1,0 z" fill="#d83a30"/><path d="M192.9,1053 l6.1,10.5 a7,7 0 0 0 6,3.5 l-6,10.5 a14,14 0 0 1 -6.1,-24.5 z" fill="#30a050"/><circle cx="205" cy="1060" r="6.5" fill="#fff"/><circle cx="205" cy="1060" r="5" fill="#3a78d8"/><rect x="255.5" y="1046.5" width="23" height="28" rx="2" fill="#d8ecf8" stroke="#5a90c0"/><rect x="258" y="1049" width="18" height="7" fill="#f8f0c0"/><rect x="258" y="1058" width="3" height="3" fill="#4a80b8"/><rect x="263" y="1058" width="3" height="3" fill="#4a80b8"/><rect x="268" y="1058" width="3" height="3" fill="#4a80b8"/><rect x="273" y="1058" width="3" height="3" fill="#4a80b8"/><rect x="258" y="1062" width="3" height="3" fill="#4a80b8"/><rect x="263" y="1062" width="3" height="3" fill="#4a80b8"/><rect x="268" y="1062" width="3" height="3" fill="#4a80b8"/><rect x="273" y="1062" width="3" height="3" fill="#4a80b8"/><rect x="258" y="1066" width="3" height="3" fill="#4a80b8"/><rect x="263" y="1066" width="3" height="3" fill="#4a80b8"/><rect x="268" y="1066" width="3" height="3" fill="#4a80b8"/><rect x="273" y="1066" width="3" height="3" fill="#4a80b8"/><rect x="258" y="1070" width="3" height="3" fill="#4a80b8"/><rect x="263" y="1070" width="3" height="3" fill="#4a80b8"/><rect x="268" y="1070" width="3" height="3" fill="#4a80b8"/><rect x="273" y="1070" width="3" height="3" fill="#4a80b8"/><rect x="313" y="1049" width="6" height="4" fill="#b8b8b8" stroke="#808080" stroke-width=".6"/><rect x="320" y="1049" width="6" height="4" fill="#b8b8b8" stroke="#808080" stroke-width=".6"/><rect x="327" y="1049" width="6" height="4" fill="#b8b8b8" stroke="#808080" stroke-width=".6"/><rect x="334" y="1049" width="6" height="4" fill="#b8b8b8" stroke="#808080" stroke-width=".6"/><rect x="316" y="1054" width="6" height="4" fill="#b8b8b8" stroke="#808080" stroke-width=".6"/><rect x="323" y="1054" width="6" height="4" fill="#b8b8b8" stroke="#808080" stroke-width=".6"/><rect x="330" y="1054" width="6" height="4" fill="#b8b8b8" stroke="#808080" stroke-width=".6"/><rect x="337" y="1054" width="6" height="4" fill="#b8b8b8" stroke="#808080" stroke-width=".6"/><rect x="313" y="1059" width="6" height="4" fill="#b8b8b8" stroke="#808080" stroke-width=".6"/><rect x="320" y="1059" width="6" height="4" fill="#b8b8b8" stroke="#808080" stroke-width=".6"/><rect x="327" y="1059" width="6" height="4" fill="#b8b8b8" stroke="#808080" stroke-width=".6"/><rect x="334" y="1059" width="6" height="4" fill="#b8b8b8" stroke="#808080" stroke-width=".6"/><rect x="316" y="1064" width="6" height="4" fill="#b8b8b8" stroke="#808080" stroke-width=".6"/><rect x="323" y="1064" width="6" height="4" fill="#b8b8b8" stroke="#808080" stroke-width=".6"/><rect x="330" y="1064" width="6" height="4" fill="#b8b8b8" stroke="#808080" stroke-width=".6"/><rect x="337" y="1064" width="6" height="4" fill="#b8b8b8" stroke="#808080" stroke-width=".6"/><rect x="313" y="1069" width="6" height="4" fill="#b8b8b8" stroke="#808080" stroke-width=".6"/><rect x="320" y="1069" width="6" height="4" fill="#b8b8b8" stroke="#808080" stroke-width=".6"/><rect x="327" y="1069" width="6" height="4" fill="#b8b8b8" stroke="#808080" stroke-width=".6"/><rect x="334" y="1069" width="6" height="4" fill="#b8b8b8" stroke="#808080" stroke-width=".6"/><rect x="376" y="1046" width="30" height="31" fill="#2e2a2a"/><path d="M389,1057.5 a5,5 0 1 0 0.8,6 v-2.5 h-3" fill="none" stroke="#d0d0d0" stroke-width="1.5"/><circle cx="397.5" cy="1061" r="5" fill="none" stroke="#2aa050" stroke-width="2"/><circle cx="453" cy="1060" r="14" fill="#d82830"/><circle cx="453" cy="1060" r="11" fill="#e8f0ee"/><path d="M443,1068 l5,-5 l2,3 l4,-7 l2,4 l5,-9" stroke="#d82830" stroke-width="2.6" fill="none"/><rect x="512" y="1050" width="16" height="20" fill="#fff" stroke="#2a5aa8"/><path d="M515,1054 h10 M515,1057 h10 M515,1060 h10 M515,1063 h10 M515,1066 h10" stroke="#2a5aa8"/><path d="M497,1050 l17,-3 v27 l-17,-3 z" fill="#2b5fae"/><text x="499" y="1065" font-size="11" font-weight="bold" font-family="Liberation Sans" fill="#fff">W</text><rect x="1643.5" y="1051.5" width="28" height="17" rx="1" fill="none" stroke="#fff" stroke-width="1.5"/><rect x="1646" y="1054" width="3" height="2.5" fill="#fff"/><rect x="1650" y="1054" width="3" height="2.5" fill="#fff"/><rect x="1654" y="1054" width="3" height="2.5" fill="#fff"/><rect x="1658" y="1054" width="3" height="2.5" fill="#fff"/><rect x="1662" y="1054" width="3" height="2.5" fill="#fff"/><rect x="1666" y="1054" width="3" height="2.5" fill="#fff"/><rect x="1646" y="1058" width="3" height="2.5" fill="#fff"/><rect x="1650" y="1058" width="3" height="2.5" fill="#fff"/><rect x="1654" y="1058" width="3" height="2.5" fill="#fff"/><rect x="1658" y="1058" width="3" height="2.5" fill="#fff"/><rect x="1662" y="1058" width="3" height="2.5" fill="#fff"/><rect x="1666" y="1058" width="3" height="2.5" fill="#fff"/><rect x="1646" y="1062" width="3" height="2.5" fill="#fff"/><rect x="1650" y="1062" width="3" height="2.5" fill="#fff"/><rect x="1654" y="1062" width="3" height="2.5" fill="#fff"/><rect x="1658" y="1062" width="3" height="2.5" fill="#fff"/><rect x="1662" y="1062" width="3" height="2.5" fill="#fff"/><rect x="1666" y="1062" width="3" height="2.5" fill="#fff"/><path d="M1686,1064 l4.5,-4 l4.5,4 z" fill="#fff"/><rect x="1707.5" y="1057.5" width="15" height="11" fill="none" stroke="#fff" stroke-width="1.4"/><rect x="1709" y="1063" width="5" height="4" fill="#fff"/><rect x="1716" y="1063" width="5" height="4" fill="#fff"/><rect x="1737.5" y="1055.5" width="8" height="13" fill="none" stroke="#fff" stroke-width="1.4"/><path d="M1732,1057 v10 M1734,1056 v4" stroke="#fff" stroke-width="1.4"/><rect x="1756" y="1064" width="2" height="2" fill="#fff"/><rect x="1759" y="1062" width="2" height="4" fill="#fff"/><rect x="1762" y="1059" width="2" height="7" fill="#fff"/><rect x="1765" y="1057" width="2" height="9" fill="#fff"/><rect x="1768" y="1055" width="2" height="12" fill="#fff"/><path d="M1781,1059 h3 l4,-4 v14 l-4,-4 h-3 z" fill="#fff"/><path d="M1790,1058 q2,4 0,8" stroke="#fff" fill="none"/></svg>
<svg class="a" style="left:1900px;top:1038px" width="20" height="12"><path d="M19,2 l-10,10 M19,6 l-6,6 M19,10 l-2,2" stroke="#a08090"/></svg>
<div class="a t" style="left:1808.67px;top:1053.94px;font-size:13.0px;line-height:13.0px;color:#ffffff;transform:scaleX(0.8269)">ENG</div>
<div class="a t" style="left:1852.89px;top:1045.94px;font-size:13.0px;line-height:13.0px;color:#ffffff;transform:scaleX(0.9065)">1:31 PM</div>
<div class="a t" style="left:1847.88px;top:1062.94px;font-size:13.0px;line-height:13.0px;color:#ffffff;transform:scaleX(0.9158)">6/09/2014</div>
</body></html>
